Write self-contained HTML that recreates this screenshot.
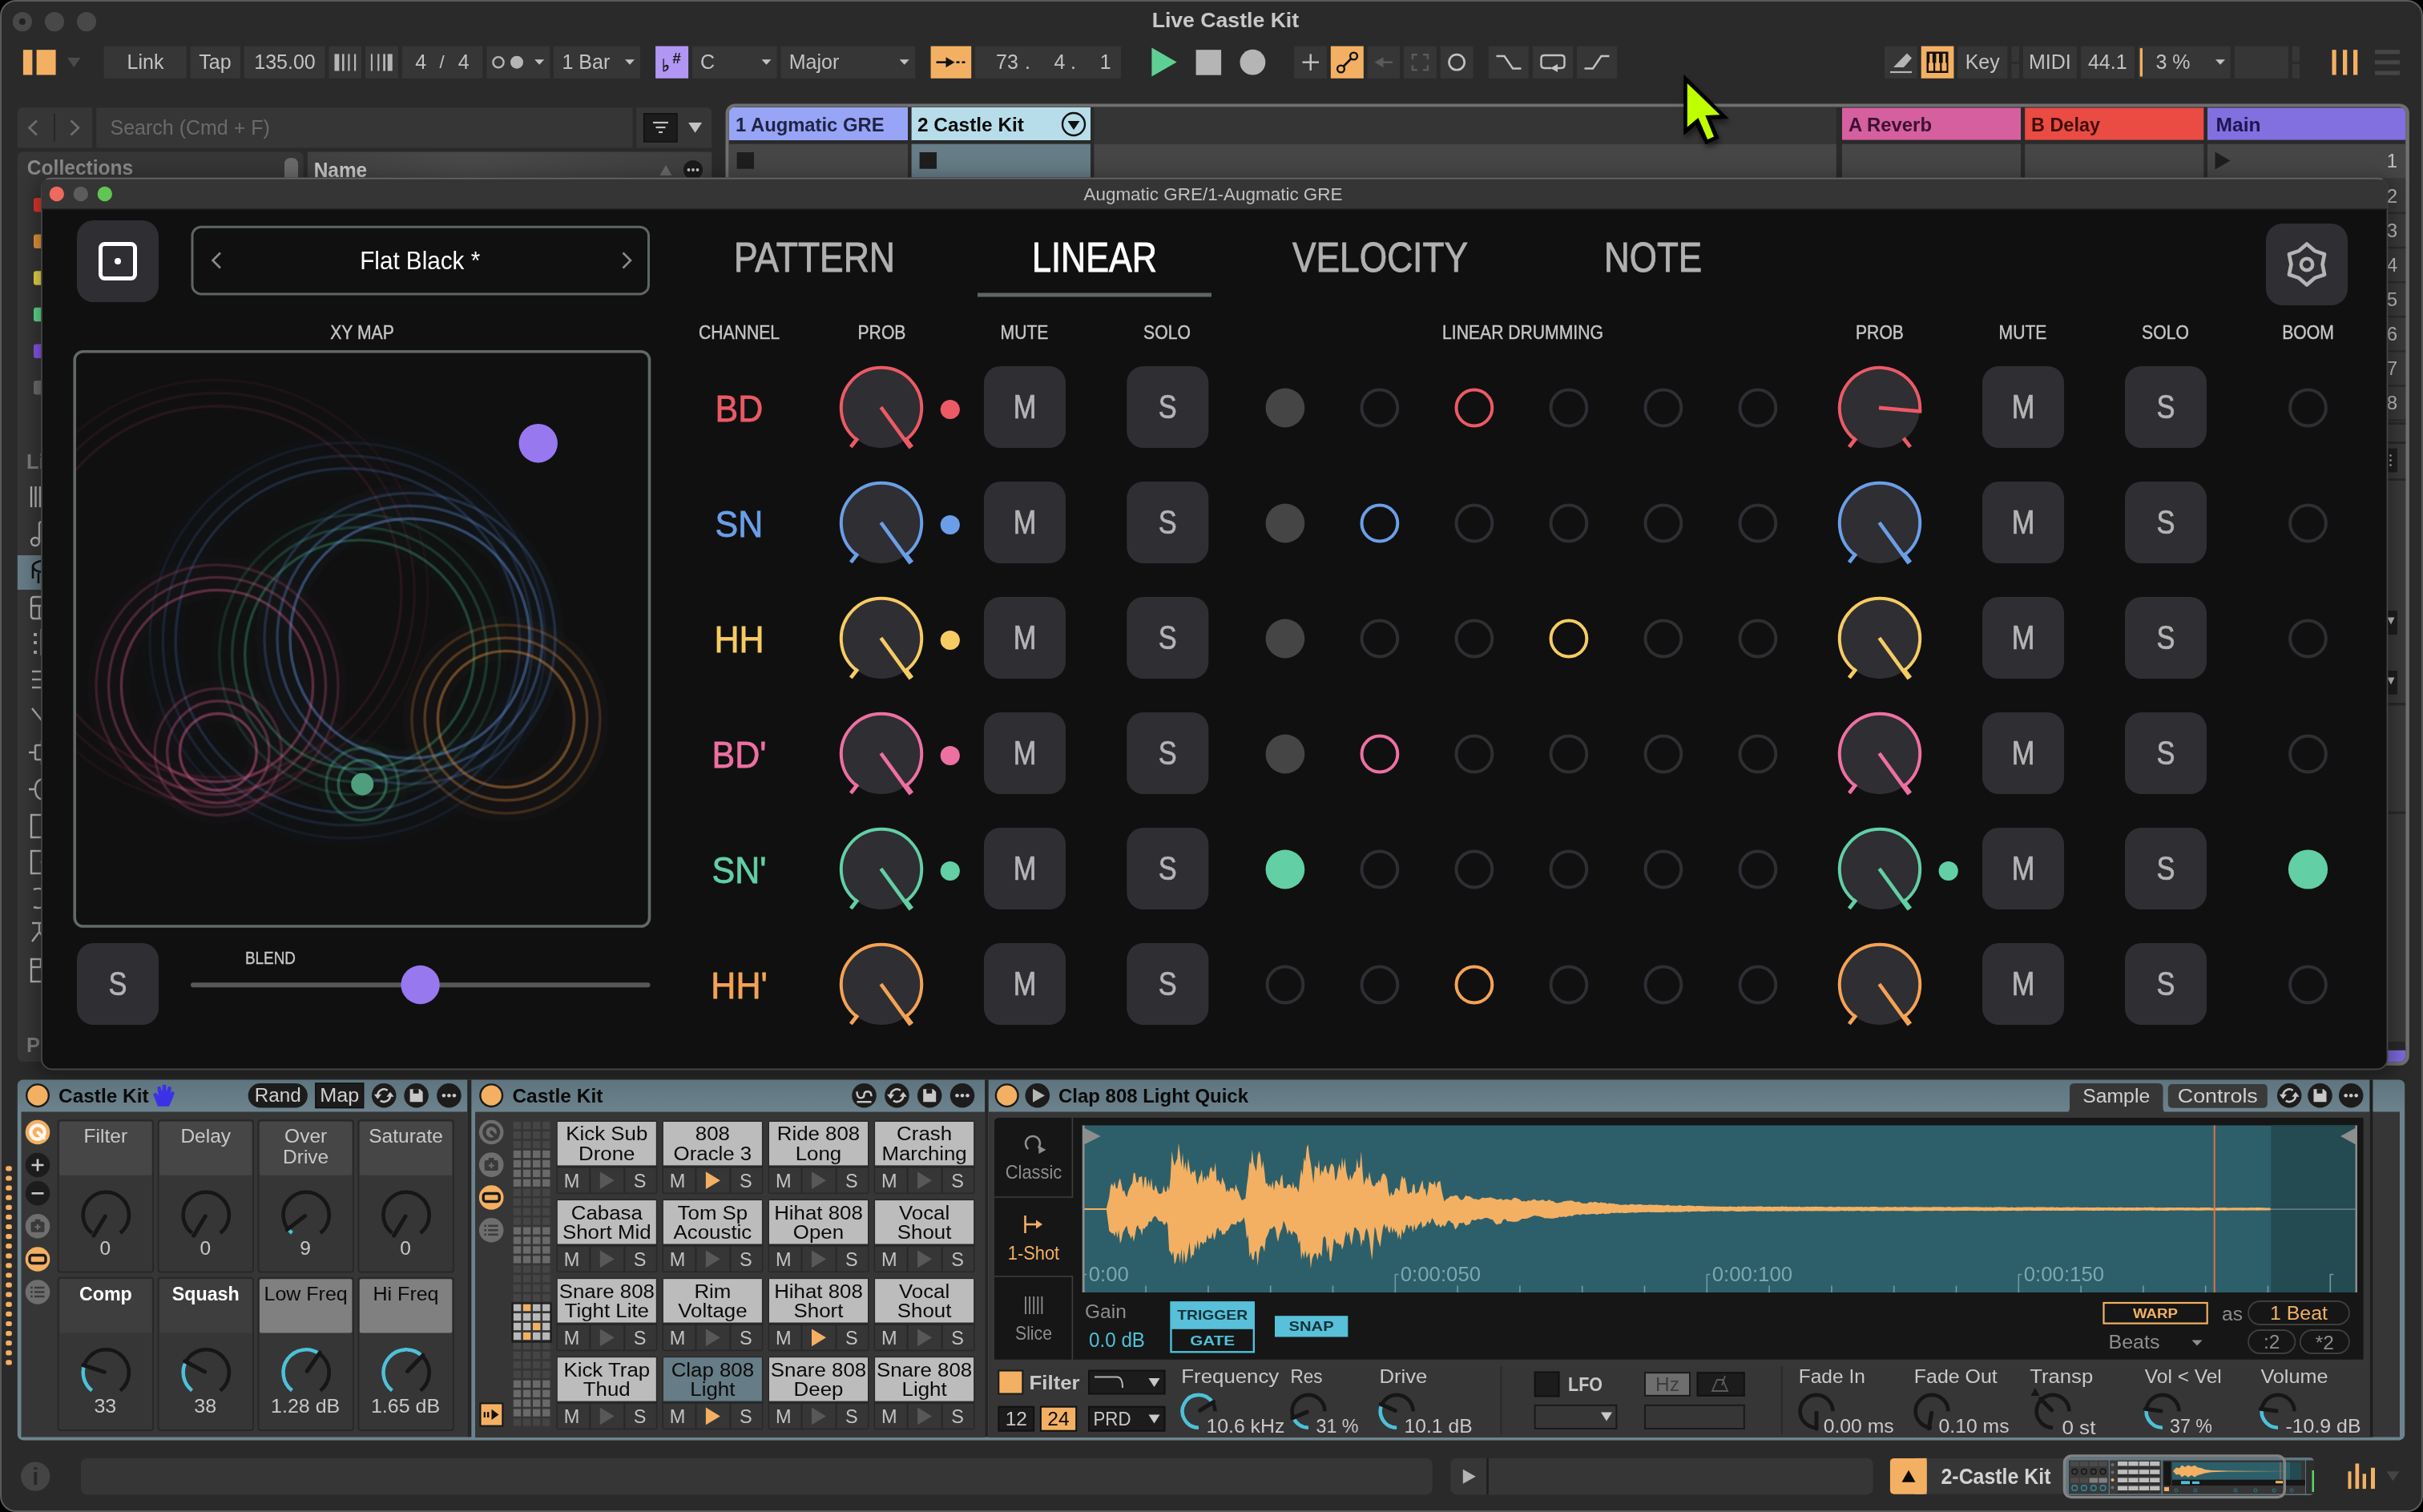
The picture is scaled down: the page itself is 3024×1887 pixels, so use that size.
<!DOCTYPE html>
<html><head><meta charset="utf-8"><title>Live Castle Kit</title>
<style>html,body{margin:0;padding:0;background:#000;overflow:hidden}svg{display:block}text{font-family:"Liberation Sans",sans-serif;white-space:pre}</style>
</head><body>
<svg style="will-change:transform" width="3024" height="1887" viewBox="0 0 3024 1887">
<rect x="0" y="0" width="3024" height="1887" fill="#000" />
<rect x="1" y="1" width="3022" height="1885" fill="#2a2a2a" rx="19" stroke="#5a5a5a" stroke-width="2" />
<circle cx="27.9" cy="27.1" r="12.1" fill="#484848" />
<circle cx="68" cy="27.1" r="12.1" fill="#484848" />
<circle cx="108" cy="27.1" r="12.1" fill="#484848" />
<circle cx="27.9" cy="27.1" r="4" fill="#222" />
<text x="1529.4" y="34.1" font-size="25" fill="#c8c8c8" text-anchor="middle" font-weight="bold"  textLength="183.5" lengthAdjust="spacingAndGlyphs">Live Castle Kit</text>
<rect x="28.9" y="62.2" width="11.5" height="31.3" fill="#f3b063" />
<rect x="45.6" y="62.2" width="24" height="31.3" fill="#f3b063" />
<polygon points="84.0,72.0 100.5,72.0 92.2,84.0" fill="#4a4a4a"/>
<rect x="129.7" y="57.6" width="103.2" height="40.2" fill="#363636" />
<text x="181.5" y="86.3" font-size="25" fill="#c2c2c2" text-anchor="middle" font-weight="normal" >Link</text>
<rect x="237.5" y="57.6" width="62.5" height="40.2" fill="#363636" />
<text x="268.5" y="86.3" font-size="25" fill="#c2c2c2" text-anchor="middle" font-weight="normal" >Tap</text>
<rect x="304.8" y="57.6" width="100.6" height="40.2" fill="#363636" />
<text x="355.5" y="86.3" font-size="25" fill="#c2c2c2" text-anchor="middle" font-weight="normal" >135.00</text>
<rect x="410.3" y="57.6" width="40.7" height="40.2" fill="#363636" />
<rect x="417.5" y="67.4" width="5.8" height="21.1" fill="#b5b5b5" />
<rect x="427" y="67.4" width="2.6" height="21.1" fill="#b5b5b5" />
<rect x="434.3" y="67.4" width="2.2" height="21.1" fill="#b5b5b5" />
<rect x="442" y="67.4" width="2.2" height="21.1" fill="#b5b5b5" />
<rect x="456" y="57.6" width="41" height="40.2" fill="#363636" />
<rect x="462.9" y="67.4" width="2" height="21.1" fill="#b5b5b5" />
<rect x="471.2" y="67.4" width="2.2" height="21.1" fill="#b5b5b5" />
<rect x="478.2" y="67.4" width="2.8" height="21.1" fill="#b5b5b5" />
<rect x="483.7" y="67.4" width="6" height="21.1" fill="#b5b5b5" />
<rect x="501.9" y="57.6" width="100.5" height="40.2" fill="#363636" />
<text x="525.3" y="86.3" font-size="25" fill="#c2c2c2" text-anchor="middle" font-weight="normal" >4</text>
<text x="551.5" y="85.3" font-size="22" fill="#c2c2c2" text-anchor="middle" font-weight="normal" >/</text>
<text x="578.7" y="86.3" font-size="25" fill="#c2c2c2" text-anchor="middle" font-weight="normal" >4</text>
<rect x="607.3" y="57.6" width="78.9" height="40.2" fill="#363636" />
<circle cx="622" cy="77.7" r="6.6" fill="none" stroke="#b5b5b5" stroke-width="2.4" />
<circle cx="645" cy="77.7" r="8" fill="#b5b5b5" />
<polygon points="667.2,74.2 679.2,74.2 673.2,80.8" fill="#c2c2c2"/>
<rect x="691" y="57.6" width="108" height="40.2" fill="#363636" />
<text x="701.5" y="86.3" font-size="25" fill="#c2c2c2" text-anchor="start" font-weight="normal" >1 Bar</text>
<polygon points="780.0,74.2 792.0,74.2 786.0,80.8" fill="#c2c2c2"/>
<rect x="818.1" y="57.6" width="41" height="40.2" fill="#b296f3" />
<text x="830.5" y="88.7" font-size="21" fill="#1a1a1a" text-anchor="middle" font-weight="bold" >♭</text>
<text x="844.5" y="79.0" font-size="19" fill="#1a1a1a" text-anchor="middle" font-weight="bold" >#</text>
<rect x="864" y="57.6" width="105.5" height="40.2" fill="#363636" />
<text x="874" y="86.3" font-size="25" fill="#c2c2c2" text-anchor="start" font-weight="normal" >C</text>
<polygon points="950.5,74.2 962.5,74.2 956.5,80.8" fill="#c2c2c2"/>
<rect x="974.4" y="57.6" width="167.9" height="40.2" fill="#363636" />
<text x="984.8" y="86.3" font-size="25" fill="#c2c2c2" text-anchor="start" font-weight="normal" >Major</text>
<polygon points="1122.7,74.2 1134.7,74.2 1128.7,80.8" fill="#c2c2c2"/>
<rect x="1161.6" y="57.6" width="50.6" height="40.2" fill="#f3b063" />
<line x1="1168.50" y1="77.70" x2="1185.00" y2="77.70" stroke="#111" stroke-width="2.6" />
<polygon points="1180.5,71.2 1180.5,84.2 1191.5,77.7" fill="#111"/>
<line x1="1193.50" y1="77.70" x2="1197.50" y2="77.70" stroke="#111" stroke-width="2.6" />
<line x1="1200.50" y1="77.70" x2="1204.50" y2="77.70" stroke="#111" stroke-width="2.6" />
<rect x="1217.1" y="57.6" width="181.9" height="40.2" fill="#363636" />
<text x="1257" y="86.3" font-size="25" fill="#c2c2c2" text-anchor="middle" font-weight="normal" >73</text>
<text x="1282.4" y="86.3" font-size="25" fill="#c2c2c2" text-anchor="middle" font-weight="normal" >.</text>
<text x="1322.5" y="86.3" font-size="25" fill="#c2c2c2" text-anchor="middle" font-weight="normal" >4</text>
<text x="1339.6" y="86.3" font-size="25" fill="#c2c2c2" text-anchor="middle" font-weight="normal" >.</text>
<text x="1379.6" y="86.3" font-size="25" fill="#c2c2c2" text-anchor="middle" font-weight="normal" >1</text>
<polygon points="1437.4,59.6 1437.4,95.5 1468.6,77.6" fill="#5fd093"/>
<rect x="1492.6" y="62.2" width="31.5" height="31.5" fill="#b5b5b5" />
<circle cx="1563.4" cy="77.7" r="15.9" fill="#b5b5b5" />
<rect x="1615.1" y="57.6" width="40.8" height="40.2" fill="#363636" />
<line x1="1625.50" y1="77.70" x2="1646.00" y2="77.70" stroke="#c2c2c2" stroke-width="2.4" />
<line x1="1635.70" y1="67.50" x2="1635.70" y2="88.00" stroke="#c2c2c2" stroke-width="2.4" />
<rect x="1660.8" y="57.6" width="41" height="40.2" fill="#f3b063" />
<line x1="1674.00" y1="85.50" x2="1689.00" y2="70.50" stroke="#111" stroke-width="2.6" />
<circle cx="1673.5" cy="86" r="4.4" fill="#f3b063" stroke="#111" stroke-width="2.4" />
<circle cx="1689.5" cy="70" r="4.4" fill="#f3b063" stroke="#111" stroke-width="2.4" />
<rect x="1706.4" y="57.6" width="40.8" height="40.2" fill="#363636" />
<line x1="1722.00" y1="77.70" x2="1738.00" y2="77.70" stroke="#5a5a5a" stroke-width="2.6" />
<polygon points="1726.5,71.2 1726.5,84.2 1715.5,77.7" fill="#5a5a5a"/>
<rect x="1752" y="57.6" width="40.8" height="40.2" fill="#363636" />
<path d="M1768.9 68.2H1762.9V74.2" fill="none" stroke="#5a5a5a" stroke-width="2.4" />
<path d="M1768.9 87.2H1762.9V81.2" fill="none" stroke="#5a5a5a" stroke-width="2.4" />
<path d="M1775.9 68.2H1781.9V74.2" fill="none" stroke="#5a5a5a" stroke-width="2.4" />
<path d="M1775.9 87.2H1781.9V81.2" fill="none" stroke="#5a5a5a" stroke-width="2.4" />
<rect x="1797.7" y="57.6" width="40.8" height="40.2" fill="#363636" />
<circle cx="1818.1" cy="77.7" r="9.6" fill="none" stroke="#c2c2c2" stroke-width="2.6" />
<rect x="1857.8" y="57.6" width="50" height="40.2" fill="#363636" />
<path d="M1867.5 70H1877.5L1888 85.5H1898.5" fill="none" stroke="#c2c2c2" stroke-width="2.4" />
<rect x="1913" y="57.6" width="50" height="40.2" fill="#363636" />
<path d="M1936 85H1927.5Q1923.5 85 1923.5 81V73Q1923.5 69 1927.5 69H1948.5Q1952.5 69 1952.5 73V81Q1952.5 85 1948.5 85H1944" fill="none" stroke="#c2c2c2" stroke-width="2.4" />
<polygon points="1944.0,80.0 1944.0,90.0 1935.0,85.0" fill="#c2c2c2"/>
<rect x="1967.9" y="57.6" width="50.3" height="40.2" fill="#363636" />
<path d="M1977.5 85.5H1988L1998.5 70H2008.5" fill="none" stroke="#c2c2c2" stroke-width="2.4" />
<rect x="2352" y="57.6" width="40.8" height="40.2" fill="#363636" />
<path d="M2363 84L2380 66.5L2386 72.5L2376 84Z" fill="#b5b5b5" />
<line x1="2359.00" y1="90.00" x2="2386.00" y2="90.00" stroke="#b5b5b5" stroke-width="2.2" />
<rect x="2397.7" y="57.6" width="40.7" height="40.2" fill="#f3b063" />
<rect x="2404.5" y="64.5" width="27" height="26.5" fill="#111" />
<rect x="2407" y="78.5" width="6" height="10" fill="#f3b063" />
<rect x="2415.2" y="78.5" width="6" height="10" fill="#f3b063" />
<rect x="2423.4" y="78.5" width="6" height="10" fill="#f3b063" />
<rect x="2408.2" y="67" width="3.6" height="12" fill="#f3b063" />
<rect x="2416.4" y="67" width="3.6" height="12" fill="#f3b063" />
<rect x="2424.6" y="67" width="3.6" height="12" fill="#f3b063" />
<rect x="2443" y="57.6" width="62.4" height="40.2" fill="#363636" />
<text x="2474.2" y="86.3" font-size="25" fill="#c2c2c2" text-anchor="middle" font-weight="normal" >Key</text>
<rect x="2510.4" y="57.6" width="9.6" height="19.4" fill="#363636" />
<rect x="2510.4" y="79.6" width="9.6" height="18.2" fill="#363636" />
<rect x="2524.8" y="57.6" width="67" height="40.2" fill="#363636" />
<text x="2558.3" y="86.3" font-size="25" fill="#c2c2c2" text-anchor="middle" font-weight="normal" >MIDI</text>
<rect x="2596.8" y="57.6" width="67" height="40.2" fill="#363636" />
<text x="2630.3" y="86.3" font-size="25" fill="#c2c2c2" text-anchor="middle" font-weight="normal" >44.1</text>
<rect x="2668.7" y="57.6" width="115" height="40.2" fill="#363636" />
<rect x="2670.7" y="60.2" width="3.3" height="35.3" fill="#f3b063" />
<text x="2712" y="86.3" font-size="25" fill="#c2c2c2" text-anchor="middle" font-weight="normal" >3 %</text>
<polygon points="2765.0,74.2 2777.0,74.2 2771.0,80.8" fill="#c2c2c2"/>
<rect x="2788.6" y="57.6" width="67.4" height="40.2" fill="#363636" />
<rect x="2860.8" y="57.6" width="9.2" height="19.4" fill="#363636" />
<rect x="2860.8" y="79.6" width="9.2" height="18.2" fill="#363636" />
<rect x="2910.5" y="62.2" width="5.2" height="31.3" fill="#f3b063" />
<rect x="2924" y="62.2" width="5.3" height="31.3" fill="#f3b063" />
<rect x="2937" y="62.2" width="5.3" height="31.3" fill="#f3b063" />
<rect x="2964" y="62.2" width="31" height="5.2" fill="#454545" />
<rect x="2964" y="75.2" width="31" height="5.2" fill="#454545" />
<rect x="2964" y="88.5" width="31" height="5.2" fill="#454545" />
<path d="M21.8 184.6V141Q21.8 134.3 28.5 134.3H115V184.6Z" fill="#363636" />
<path d="M46 150.5L36.5 159.5L46 168.5" fill="none" stroke="#6e6e6e" stroke-width="2.6" />
<line x1="68.00" y1="142.00" x2="68.00" y2="177.00" stroke="#222" stroke-width="1.6" />
<path d="M88.5 150.5L98 159.5L88.5 168.5" fill="none" stroke="#6e6e6e" stroke-width="2.6" />
<rect x="120.2" y="134.3" width="669.3" height="50.3" fill="#363636" />
<text x="137.5" y="168.4" font-size="25" fill="#6a6a6a" text-anchor="start" font-weight="normal" >Search (Cmd + F)</text>
<path d="M794.3 134.3H881.5Q888.2 134.3 888.2 141V184.6H794.3Z" fill="#363636" />
<rect x="803.7" y="141.8" width="41.3" height="35.2" fill="#1c1c1c" stroke="#101010" stroke-width="1.5" />
<line x1="815.00" y1="153.00" x2="834.00" y2="153.00" stroke="#c2c2c2" stroke-width="2.2" />
<line x1="818.50" y1="159.00" x2="830.50" y2="159.00" stroke="#c2c2c2" stroke-width="2.2" />
<line x1="822.00" y1="165.00" x2="827.00" y2="165.00" stroke="#c2c2c2" stroke-width="2.2" />
<polygon points="859.1,152.9 876.1,152.9 867.6,165.7" fill="#c2c2c2"/>
<rect x="21.8" y="189.5" width="356.8" height="1135.5" fill="#363636" rx="6" />
<text x="33.8" y="218.2" font-size="25.5" fill="#8a8a8a" text-anchor="start" font-weight="bold"  textLength="132.5" lengthAdjust="spacingAndGlyphs">Collections</text>
<path d="M355 230V205Q355 197 363.5 197Q372 197 372 205V230Z" fill="#6a6a6a" />
<linearGradient id="gn" x1="0" x2="1" y1="0" y2="0"><stop offset="0" stop-color="#404040"/><stop offset="0.4" stop-color="#494949"/><stop offset="1" stop-color="#3e3e3e"/></linearGradient>
<rect x="383.8" y="189.5" width="504.4" height="40.5" fill="url(#gn)" />
<text x="391.7" y="221.1" font-size="25.5" fill="#c8c8c8" text-anchor="start" font-weight="bold"  textLength="66.5" lengthAdjust="spacingAndGlyphs">Name</text>
<polygon points="823.5,219.0 838.5,219.0 831.0,206.0" fill="#6a6a6a"/>
<circle cx="865" cy="212" r="12" fill="#1a1a1a" />
<circle cx="859.5" cy="212" r="1.9" fill="#c8c8c8" />
<circle cx="865" cy="212" r="1.9" fill="#c8c8c8" />
<circle cx="870.5" cy="212" r="1.9" fill="#c8c8c8" />
<rect x="42" y="247" width="12" height="17.5" fill="#e0362c" rx="3" />
<rect x="42" y="292.6" width="12" height="17.5" fill="#e8963a" rx="3" />
<rect x="42" y="338.2" width="12" height="17.5" fill="#ecd84a" rx="3" />
<rect x="42" y="383.8" width="12" height="17.5" fill="#5fdc8c" rx="3" />
<rect x="42" y="429.4" width="12" height="17.5" fill="#8a55ee" rx="3" />
<rect x="42" y="475" width="12" height="17.5" fill="#6e6e6e" rx="3" />
<text x="33" y="584.8" font-size="25.5" fill="#7c7c7c" text-anchor="start" font-weight="bold" >Library</text>
<rect x="21.8" y="693" width="32.2" height="43" fill="#667c86" />
<g transform="translate(4,0)">
<line x1="35.00" y1="607.00" x2="35.00" y2="633.00" stroke="#b5b5b5" stroke-width="2.4" />
<line x1="40.50" y1="607.00" x2="40.50" y2="633.00" stroke="#b5b5b5" stroke-width="2.4" />
<line x1="46.00" y1="607.00" x2="46.00" y2="633.00" stroke="#b5b5b5" stroke-width="2.4" />
<circle cx="40" cy="676" r="5" fill="none" stroke="#b5b5b5" stroke-width="2.4" />
<line x1="45.00" y1="676.00" x2="45.00" y2="652.00" stroke="#b5b5b5" stroke-width="2.4" />
<line x1="45.00" y1="652.00" x2="54.00" y2="650.00" stroke="#b5b5b5" stroke-width="2.4" />
<ellipse cx="50" cy="707" rx="13" ry="7" fill="none" stroke="#111" stroke-width="2.6"/>
<line x1="37.00" y1="707.00" x2="37.00" y2="722.00" stroke="#111" stroke-width="2.6" />
<line x1="44.00" y1="715.00" x2="44.00" y2="728.00" stroke="#111" stroke-width="2.6" />
<rect x="35" y="745" width="25" height="27" fill="none" rx="3" stroke="#b5b5b5" stroke-width="2.4" />
<line x1="35.00" y1="756.00" x2="56.00" y2="756.00" stroke="#b5b5b5" stroke-width="2.4" />
<line x1="45.00" y1="756.00" x2="45.00" y2="772.00" stroke="#b5b5b5" stroke-width="2.4" />
<rect x="38" y="790" width="4" height="4" fill="#b5b5b5" />
<line x1="48.00" y1="785.00" x2="48.00" y2="818.00" stroke="#b5b5b5" stroke-width="2.4" />
<rect x="38" y="800" width="4" height="4" fill="#b5b5b5" />
<line x1="48.00" y1="785.00" x2="48.00" y2="818.00" stroke="#b5b5b5" stroke-width="2.4" />
<rect x="38" y="812" width="4" height="4" fill="#b5b5b5" />
<line x1="48.00" y1="785.00" x2="48.00" y2="818.00" stroke="#b5b5b5" stroke-width="2.4" />
<line x1="36.00" y1="838.00" x2="54.00" y2="838.00" stroke="#b5b5b5" stroke-width="2.4" />
<line x1="36.00" y1="848.00" x2="54.00" y2="848.00" stroke="#b5b5b5" stroke-width="2.4" />
<line x1="36.00" y1="858.00" x2="54.00" y2="858.00" stroke="#b5b5b5" stroke-width="2.4" />
<path d="M36 884L52 904" fill="none" stroke="#b5b5b5" stroke-width="2.4" />
<rect x="40" y="930" width="16" height="18" fill="none" rx="2" stroke="#b5b5b5" stroke-width="2.4" />
<line x1="32.00" y1="939.00" x2="40.00" y2="939.00" stroke="#b5b5b5" stroke-width="2.4" />
<line x1="48.00" y1="924.00" x2="48.00" y2="930.00" stroke="#b5b5b5" stroke-width="2.4" />
<line x1="48.00" y1="948.00" x2="48.00" y2="954.00" stroke="#b5b5b5" stroke-width="2.4" />
<path d="M32 985H40M52 972Q40 972 40 985Q40 998 52 998" fill="none" stroke="#b5b5b5" stroke-width="2.4" />
<rect x="35" y="1017" width="25" height="28" fill="none" stroke="#b5b5b5" stroke-width="2.4" />
<rect x="35" y="1062" width="25" height="28" fill="none" stroke="#b5b5b5" stroke-width="2.4" />
<circle cx="48" cy="1076" r="1.5" fill="#b5b5b5" />
<path d="M38 1110Q50 1106 52 1116M38 1132Q50 1136 52 1126" fill="none" stroke="#b5b5b5" stroke-width="2.4" />
<path d="M36 1152H54M45 1152V1163L36 1175M45 1163L54 1175" fill="none" stroke="#b5b5b5" stroke-width="2.4" />
<rect x="35" y="1197" width="25" height="28" fill="none" stroke="#b5b5b5" stroke-width="2.4" />
<line x1="35.00" y1="1207.00" x2="56.00" y2="1207.00" stroke="#b5b5b5" stroke-width="2.4" />
<line x1="47.00" y1="1197.00" x2="47.00" y2="1207.00" stroke="#b5b5b5" stroke-width="2.4" />
</g>
<text x="33" y="1312.8" font-size="25.5" fill="#7c7c7c" text-anchor="start" font-weight="bold" >Places</text>
<rect x="905.5" y="129.5" width="2101.4" height="1200.3" fill="#707070" rx="12" />
<rect x="909.6" y="133.6" width="2092.6" height="1191.7" fill="#2a2a2a" rx="8" />
<clipPath id="cs"><rect x="909.6" y="133.6" width="2092.6" height="1191.7" rx="8"/></clipPath><g clip-path="url(#cs)">
<rect x="1365.5" y="133.6" width="926.3" height="46.4" fill="#353535" />
<rect x="1365.5" y="180" width="926.3" height="60" fill="#464646" />
<rect x="909.6" y="179.7" width="223.4" height="60.3" fill="#464646" />
<rect x="1137.6" y="179.7" width="223.4" height="60.3" fill="#667c86" />
<rect x="909.6" y="134" width="223.4" height="41" fill="#98a4f6" />
<text x="918" y="163.6" font-size="23.5" fill="#1e2444" text-anchor="start" font-weight="bold"  textLength="185.5" lengthAdjust="spacingAndGlyphs">1 Augmatic GRE</text>
<rect x="1137.6" y="134" width="223.4" height="41" fill="#b6dde9" />
<text x="1145" y="163.6" font-size="23.5" fill="#0a0a0a" text-anchor="start" font-weight="bold"  textLength="133" lengthAdjust="spacingAndGlyphs">2 Castle Kit</text>
<circle cx="1340" cy="155" r="14" fill="none" stroke="#111" stroke-width="2.4" />
<polygon points="1332.5,151.0 1347.5,151.0 1340.0,162.0" fill="#111"/>
<rect x="919.6" y="190" width="21.4" height="20.7" fill="#1e1e1e" />
<rect x="1147.6" y="190" width="21.4" height="20.7" fill="#1e1e1e" />
<rect x="2299" y="134.5" width="223" height="40.1" fill="#d65fa0" />
<text x="2307" y="163.6" font-size="23.5" fill="#3c1232" text-anchor="start" font-weight="bold"  textLength="104" lengthAdjust="spacingAndGlyphs">A Reverb</text>
<rect x="2527.2" y="134.5" width="223.1" height="40.1" fill="#ea4b42" />
<text x="2535" y="163.6" font-size="23.5" fill="#3e0f0c" text-anchor="start" font-weight="bold"  textLength="86" lengthAdjust="spacingAndGlyphs">B Delay</text>
<rect x="2755" y="134.5" width="248" height="40.1" fill="#8270e0" />
<text x="2765.6" y="163.6" font-size="23.5" fill="#1d1650" text-anchor="start" font-weight="bold"  textLength="56" lengthAdjust="spacingAndGlyphs">Main</text>
<rect x="2299" y="179.7" width="223" height="60.3" fill="#464646" />
<rect x="2527.2" y="179.7" width="223.1" height="60.3" fill="#464646" />
<rect x="2755" y="179.7" width="248" height="42.3" fill="#464646" />
<polygon points="2764.5,189.5 2764.5,211.5 2783.5,200.5" fill="#1e1e1e"/>
<text x="2992" y="209.3" font-size="24" fill="#c2c2c2" text-anchor="end" font-weight="normal" >1</text>
<rect x="2755" y="222" width="248" height="1078" fill="#3a3a3a" />
<text x="2992" y="252.6" font-size="24" fill="#c2c2c2" text-anchor="end" font-weight="normal" >2</text>
<rect x="2755" y="264.8" width="248" height="2.3" fill="#2c2c2c" />
<text x="2992" y="295.7" font-size="24" fill="#c2c2c2" text-anchor="end" font-weight="normal" >3</text>
<rect x="2755" y="307.9" width="248" height="2.3" fill="#2c2c2c" />
<text x="2992" y="338.8" font-size="24" fill="#c2c2c2" text-anchor="end" font-weight="normal" >4</text>
<rect x="2755" y="351" width="248" height="2.3" fill="#2c2c2c" />
<text x="2992" y="381.9" font-size="24" fill="#c2c2c2" text-anchor="end" font-weight="normal" >5</text>
<rect x="2755" y="394.1" width="248" height="2.3" fill="#2c2c2c" />
<text x="2992" y="425.0" font-size="24" fill="#c2c2c2" text-anchor="end" font-weight="normal" >6</text>
<rect x="2755" y="437.2" width="248" height="2.3" fill="#2c2c2c" />
<text x="2992" y="468.1" font-size="24" fill="#c2c2c2" text-anchor="end" font-weight="normal" >7</text>
<rect x="2755" y="480.3" width="248" height="2.3" fill="#2c2c2c" />
<text x="2992" y="511.2" font-size="24" fill="#c2c2c2" text-anchor="end" font-weight="normal" >8</text>
<rect x="2755" y="523.4" width="248" height="2.3" fill="#2c2c2c" />
<rect x="2755" y="527" width="248" height="3" fill="#2a2a2a" />
<rect x="2755" y="551" width="248" height="3" fill="#2a2a2a" />
<rect x="2979" y="559.6" width="13" height="29.8" fill="#1e1e1e" />
<circle cx="2983.5" cy="568.5" r="1.3" fill="#c2c2c2" />
<circle cx="2983.5" cy="574.5" r="1.3" fill="#c2c2c2" />
<circle cx="2983.5" cy="580.5" r="1.3" fill="#c2c2c2" />
<rect x="2755" y="597" width="248" height="3" fill="#2a2a2a" />
<rect x="2979" y="762" width="13" height="30" fill="#1e1e1e" />
<polygon points="2979.5,770.5 2988.5,770.5 2984.0,779.5" fill="#c2c2c2"/>
<rect x="2979" y="837" width="13" height="29.7" fill="#1e1e1e" />
<polygon points="2979.5,845.5 2988.5,845.5 2984.0,854.5" fill="#c2c2c2"/>
<rect x="2755" y="877" width="248" height="3.5" fill="#2a2a2a" />
<rect x="2755" y="1012.5" width="248" height="3.5" fill="#2a2a2a" />
<rect x="2755" y="1306" width="248" height="4.8" fill="#2a2a2a" />
<rect x="2755" y="1310.8" width="248" height="17.2" fill="#7c6cdb" />
</g>
<rect x="46" y="222" width="2940" height="1122" fill="#000" rx="16" opacity="0.35" filter="url(#sh)"/>
<filter id="sh" x="-5%" y="-5%" width="110%" height="115%"><feGaussianBlur stdDeviation="12"/></filter>
<rect x="52" y="222.2" width="2927.5" height="1112.3" fill="#101011" rx="13" stroke="#454545" stroke-width="1.8" />
<path d="M52 261.2V235.2Q52 222.2 65 222.2H2966.5Q2979.5 222.2 2979.5 235.2V261.2Z" fill="#353535" />
<path d="M58 223.6Q60 222.8 65 222.8H2966.5Q2971 222.8 2973.5 223.6" fill="none" stroke="#707070" stroke-width="1.2" />
<line x1="52.00" y1="261.20" x2="2979.50" y2="261.20" stroke="#1a1a1a" stroke-width="1.2" />
<circle cx="70.8" cy="242" r="9.2" fill="#ee6a5e" />
<circle cx="100.8" cy="242" r="9.2" fill="#5c5c5c" />
<circle cx="130.8" cy="242" r="9.2" fill="#61c554" />
<text x="1514" y="249.5" font-size="22.8" fill="#c0c0c0" text-anchor="middle" font-weight="normal"  textLength="323" lengthAdjust="spacingAndGlyphs">Augmatic GRE/1-Augmatic GRE</text>
<rect x="96" y="275" width="102" height="102" fill="#2f2e33" rx="20.5" />
<rect x="125.5" y="304.5" width="43" height="43" fill="none" rx="5" stroke="#fff" stroke-width="5" />
<circle cx="147" cy="326" r="4" fill="#fff" />
<rect x="240" y="283.2" width="569.5" height="83.7" fill="none" rx="11" stroke="#5f6565" stroke-width="3" />
<path d="M275 315.5L265.5 325L275 334.5" fill="none" stroke="#8a8a8a" stroke-width="2.6" />
<path d="M777.5 315.5L787 325L777.5 334.5" fill="none" stroke="#8a8a8a" stroke-width="2.6" />
<text x="524.2" y="336.3" font-size="31.5" fill="#fff" text-anchor="middle" font-weight="normal"  textLength="150" lengthAdjust="spacingAndGlyphs">Flat Black *</text>
<text x="1016.5" y="338.9" font-size="52" fill="#b0b0b0" text-anchor="middle" font-weight="normal" stroke="#b0b0b0" stroke-width="0.9" textLength="201" lengthAdjust="spacingAndGlyphs">PATTERN</text>
<text x="1366" y="338.9" font-size="52" fill="#fff" text-anchor="middle" font-weight="normal" stroke="#fff" stroke-width="0.9" textLength="156" lengthAdjust="spacingAndGlyphs">LINEAR</text>
<text x="1722.5" y="338.9" font-size="52" fill="#b0b0b0" text-anchor="middle" font-weight="normal" stroke="#b0b0b0" stroke-width="0.9" textLength="219" lengthAdjust="spacingAndGlyphs">VELOCITY</text>
<text x="2063" y="338.9" font-size="52" fill="#b0b0b0" text-anchor="middle" font-weight="normal" stroke="#b0b0b0" stroke-width="0.9" textLength="122" lengthAdjust="spacingAndGlyphs">NOTE</text>
<rect x="1220" y="365.5" width="292" height="5" fill="#5f6565" />
<rect x="2828" y="279" width="102" height="102" fill="#2f2e33" rx="20.5" />
<path d="M2879.0 304.5 L2888.8 313.1 L2901.1 317.2 L2898.5 330.0 L2901.1 342.8 L2888.8 346.9 L2879.0 355.5 L2869.2 346.9 L2856.9 342.8 L2859.5 330.0 L2856.9 317.2 L2869.2 313.1Z" fill="none" stroke="#b4b4b4" stroke-width="4.6" stroke-linejoin="round"/>
<circle cx="2879" cy="330" r="7.2" fill="none" stroke="#b4b4b4" stroke-width="4.4" />
<text x="452" y="423.1" font-size="23.5" fill="#c6c6c6" text-anchor="middle" font-weight="normal" stroke="#c6c6c6" stroke-width="0.40" textLength="79.5438" lengthAdjust="spacingAndGlyphs">XY MAP</text>
<text x="922.5" y="423.1" font-size="23.5" fill="#c6c6c6" text-anchor="middle" font-weight="normal" stroke="#c6c6c6" stroke-width="0.40" textLength="101.076" lengthAdjust="spacingAndGlyphs">CHANNEL</text>
<text x="1100.5" y="423.1" font-size="23.5" fill="#c6c6c6" text-anchor="middle" font-weight="normal" stroke="#c6c6c6" stroke-width="0.40" textLength="59.9404" lengthAdjust="spacingAndGlyphs">PROB</text>
<text x="1278.5" y="423.1" font-size="23.5" fill="#c6c6c6" text-anchor="middle" font-weight="normal" stroke="#c6c6c6" stroke-width="0.40" textLength="59.9206" lengthAdjust="spacingAndGlyphs">MUTE</text>
<text x="1456.5" y="423.1" font-size="23.5" fill="#c6c6c6" text-anchor="middle" font-weight="normal" stroke="#c6c6c6" stroke-width="0.40" textLength="58.7722" lengthAdjust="spacingAndGlyphs">SOLO</text>
<text x="1900.5" y="423.1" font-size="23.5" fill="#c6c6c6" text-anchor="middle" font-weight="normal" stroke="#c6c6c6" stroke-width="0.40" textLength="200.94" lengthAdjust="spacingAndGlyphs">LINEAR DRUMMING</text>
<text x="2346" y="423.1" font-size="23.5" fill="#c6c6c6" text-anchor="middle" font-weight="normal" stroke="#c6c6c6" stroke-width="0.40" textLength="59.9404" lengthAdjust="spacingAndGlyphs">PROB</text>
<text x="2524.5" y="423.1" font-size="23.5" fill="#c6c6c6" text-anchor="middle" font-weight="normal" stroke="#c6c6c6" stroke-width="0.40" textLength="59.9206" lengthAdjust="spacingAndGlyphs">MUTE</text>
<text x="2702.5" y="423.1" font-size="23.5" fill="#c6c6c6" text-anchor="middle" font-weight="normal" stroke="#c6c6c6" stroke-width="0.40" textLength="58.7722" lengthAdjust="spacingAndGlyphs">SOLO</text>
<text x="2880.5" y="423.1" font-size="23.5" fill="#c6c6c6" text-anchor="middle" font-weight="normal" stroke="#c6c6c6" stroke-width="0.40" textLength="64.6281" lengthAdjust="spacingAndGlyphs">BOOM</text>
<clipPath id="cxy"><rect x="94.5" y="440" width="715" height="715" rx="9"/></clipPath><g clip-path="url(#cxy)">
<circle cx="269.4" cy="738.5" r="248" fill="none" stroke="#e0566a" stroke-width="54.8" opacity="0.006"/>
<circle cx="269.4" cy="738.5" r="231.6" fill="none" stroke="#e0566a" stroke-width="5" opacity="0.026"/>
<circle cx="269.4" cy="738.5" r="231.6" fill="none" stroke="#e0566a" stroke-width="3.2" opacity="0.086"/>
<circle cx="269.4" cy="738.5" r="248" fill="none" stroke="#e0566a" stroke-width="5" opacity="0.019"/>
<circle cx="269.4" cy="738.5" r="248" fill="none" stroke="#e0566a" stroke-width="3.2" opacity="0.065"/>
<circle cx="269.4" cy="738.5" r="264.4" fill="none" stroke="#e0566a" stroke-width="5" opacity="0.013"/>
<circle cx="269.4" cy="738.5" r="264.4" fill="none" stroke="#e0566a" stroke-width="3.2" opacity="0.043"/>
<circle cx="433.8" cy="799.4" r="230.75" fill="none" stroke="#5f86d8" stroke-width="54.1" opacity="0.011"/>
<circle cx="433.8" cy="799.4" r="214.7" fill="none" stroke="#5f86d8" stroke-width="5" opacity="0.048"/>
<circle cx="433.8" cy="799.4" r="214.7" fill="none" stroke="#5f86d8" stroke-width="3.2" opacity="0.162"/>
<circle cx="433.8" cy="799.4" r="230.5" fill="none" stroke="#5f86d8" stroke-width="5" opacity="0.035"/>
<circle cx="433.8" cy="799.4" r="230.5" fill="none" stroke="#5f86d8" stroke-width="3.2" opacity="0.119"/>
<circle cx="433.8" cy="799.4" r="246.8" fill="none" stroke="#5f86d8" stroke-width="5" opacity="0.022"/>
<circle cx="433.8" cy="799.4" r="246.8" fill="none" stroke="#5f86d8" stroke-width="3.2" opacity="0.076"/>
<circle cx="448.7" cy="817" r="159" fill="none" stroke="#3f9e78" stroke-width="54" opacity="0.019"/>
<circle cx="448.7" cy="817" r="143" fill="none" stroke="#3f9e78" stroke-width="5" opacity="0.088"/>
<circle cx="448.7" cy="817" r="143" fill="none" stroke="#3f9e78" stroke-width="3.2" opacity="0.297"/>
<circle cx="448.7" cy="817" r="159" fill="none" stroke="#3f9e78" stroke-width="5" opacity="0.064"/>
<circle cx="448.7" cy="817" r="159" fill="none" stroke="#3f9e78" stroke-width="3.2" opacity="0.216"/>
<circle cx="448.7" cy="817" r="175" fill="none" stroke="#3f9e78" stroke-width="5" opacity="0.042"/>
<circle cx="448.7" cy="817" r="175" fill="none" stroke="#3f9e78" stroke-width="3.2" opacity="0.140"/>
<circle cx="511.5" cy="796.8" r="165.5" fill="none" stroke="#6a95e6" stroke-width="54" opacity="0.022"/>
<circle cx="511.5" cy="796.8" r="149.5" fill="none" stroke="#6a95e6" stroke-width="5" opacity="0.099"/>
<circle cx="511.5" cy="796.8" r="149.5" fill="none" stroke="#6a95e6" stroke-width="3.2" opacity="0.335"/>
<circle cx="511.5" cy="796.8" r="165.5" fill="none" stroke="#6a95e6" stroke-width="5" opacity="0.072"/>
<circle cx="511.5" cy="796.8" r="165.5" fill="none" stroke="#6a95e6" stroke-width="3.2" opacity="0.243"/>
<circle cx="511.5" cy="796.8" r="181.5" fill="none" stroke="#6a95e6" stroke-width="5" opacity="0.048"/>
<circle cx="511.5" cy="796.8" r="181.5" fill="none" stroke="#6a95e6" stroke-width="3.2" opacity="0.162"/>
<circle cx="271" cy="856" r="135.3" fill="none" stroke="#e0648e" stroke-width="53.4" opacity="0.018"/>
<circle cx="271" cy="856" r="119.6" fill="none" stroke="#e0648e" stroke-width="5" opacity="0.083"/>
<circle cx="271" cy="856" r="119.6" fill="none" stroke="#e0648e" stroke-width="3.2" opacity="0.281"/>
<circle cx="271" cy="856" r="135.5" fill="none" stroke="#e0648e" stroke-width="5" opacity="0.064"/>
<circle cx="271" cy="856" r="135.5" fill="none" stroke="#e0648e" stroke-width="3.2" opacity="0.216"/>
<circle cx="271" cy="856" r="151" fill="none" stroke="#e0648e" stroke-width="5" opacity="0.042"/>
<circle cx="271" cy="856" r="151" fill="none" stroke="#e0648e" stroke-width="3.2" opacity="0.140"/>
<circle cx="272.3" cy="938.4" r="63.4" fill="none" stroke="#e8689a" stroke-width="53.2" opacity="0.022"/>
<circle cx="272.3" cy="938.4" r="47.8" fill="none" stroke="#e8689a" stroke-width="5" opacity="0.099"/>
<circle cx="272.3" cy="938.4" r="47.8" fill="none" stroke="#e8689a" stroke-width="3.2" opacity="0.335"/>
<circle cx="272.3" cy="938.4" r="63.6" fill="none" stroke="#e8689a" stroke-width="5" opacity="0.072"/>
<circle cx="272.3" cy="938.4" r="63.6" fill="none" stroke="#e8689a" stroke-width="3.2" opacity="0.243"/>
<circle cx="272.3" cy="938.4" r="79" fill="none" stroke="#e8689a" stroke-width="5" opacity="0.048"/>
<circle cx="272.3" cy="938.4" r="79" fill="none" stroke="#e8689a" stroke-width="3.2" opacity="0.162"/>
<circle cx="631.4" cy="897.5" r="101.25" fill="none" stroke="#e8944a" stroke-width="54.5" opacity="0.022"/>
<circle cx="631.4" cy="897.5" r="85" fill="none" stroke="#e8944a" stroke-width="5" opacity="0.099"/>
<circle cx="631.4" cy="897.5" r="85" fill="none" stroke="#e8944a" stroke-width="3.2" opacity="0.335"/>
<circle cx="631.4" cy="897.5" r="101.3" fill="none" stroke="#e8944a" stroke-width="5" opacity="0.072"/>
<circle cx="631.4" cy="897.5" r="101.3" fill="none" stroke="#e8944a" stroke-width="3.2" opacity="0.243"/>
<circle cx="631.4" cy="897.5" r="117.5" fill="none" stroke="#e8944a" stroke-width="5" opacity="0.048"/>
<circle cx="631.4" cy="897.5" r="117.5" fill="none" stroke="#e8944a" stroke-width="3.2" opacity="0.162"/>
<circle cx="452.2" cy="978.7" r="37.5" fill="none" stroke="#58c89a" stroke-width="37" opacity="0.019"/>
<circle cx="452.2" cy="978.7" r="30" fill="none" stroke="#58c89a" stroke-width="5" opacity="0.088"/>
<circle cx="452.2" cy="978.7" r="30" fill="none" stroke="#58c89a" stroke-width="3.2" opacity="0.297"/>
<circle cx="452.2" cy="978.7" r="45" fill="none" stroke="#58c89a" stroke-width="5" opacity="0.064"/>
<circle cx="452.2" cy="978.7" r="45" fill="none" stroke="#58c89a" stroke-width="3.2" opacity="0.216"/>
<circle cx="452.2" cy="978.7" r="14" fill="#4f9f7f" />
</g>
<rect x="93.2" y="438.7" width="717.3" height="717.3" fill="none" rx="10.5" stroke="#626868" stroke-width="3.6" />
<circle cx="671.7" cy="553.2" r="24.2" fill="#9878ee" />
<rect x="96" y="1177" width="102" height="102" fill="#2f2e33" rx="20.5" />
<text x="147" y="1242.4" font-size="42" fill="#b4b4b4" text-anchor="middle" font-weight="normal" stroke="#b4b4b4" stroke-width="0.71" textLength="22.9726" lengthAdjust="spacingAndGlyphs">S</text>
<text x="337.5" y="1202.6" font-size="21.5" fill="#c6c6c6" text-anchor="middle" font-weight="normal" stroke="#c6c6c6" stroke-width="0.37" textLength="63.0908" lengthAdjust="spacingAndGlyphs">BLEND</text>
<line x1="241" y1="1229.3" x2="808.5" y2="1229.3" stroke="#585858" stroke-width="6" stroke-linecap="round"/>
<circle cx="524.6" cy="1229" r="24.2" fill="#9878ee" />
<text x="922.5" y="526.0" font-size="46.5" fill="#ec5a65" text-anchor="middle" font-weight="normal" stroke="#ec5a65" stroke-width="0.79" textLength="59.7538" lengthAdjust="spacingAndGlyphs">BD</text>
<circle cx="1100" cy="509" r="50" fill="#2f2e33" />
<path d="M1069.09 548.56A50.2 50.2 0 1 1 1130.91 548.56" fill="none" stroke="#ec5a65" stroke-width="4" />
<line x1="1070.45" y1="546.82" x2="1061.83" y2="557.86" stroke="#ec5a65" stroke-width="4.8" />
<line x1="1129.55" y1="546.82" x2="1138.17" y2="557.86" stroke="#ec5a65" stroke-width="4.8" />
<line x1="1099.41" y1="508.19" x2="1136.44" y2="559.16" stroke="#ec5a65" stroke-width="4.6" />
<circle cx="1185.8" cy="511" r="12.1" fill="#ec5a65" />
<rect x="1228" y="457" width="102" height="102" fill="#2f2e33" rx="20.5" />
<text x="1279" y="522.4" font-size="42" fill="#b4b4b4" text-anchor="middle" font-weight="normal" stroke="#b4b4b4" stroke-width="0.71" textLength="28.6901" lengthAdjust="spacingAndGlyphs">M</text>
<rect x="1406.3" y="457" width="102" height="102" fill="#2f2e33" rx="20.5" />
<text x="1457.3" y="522.4" font-size="42" fill="#b4b4b4" text-anchor="middle" font-weight="normal" stroke="#b4b4b4" stroke-width="0.71" textLength="22.9726" lengthAdjust="spacingAndGlyphs">S</text>
<circle cx="1603.9" cy="509" r="24.4" fill="#454545" />
<circle cx="1721.9" cy="509" r="22.4" fill="none" stroke="#2f2e33" stroke-width="4" />
<circle cx="1839.9" cy="509" r="22.4" fill="none" stroke="#ec5a65" stroke-width="4" />
<circle cx="1957.9" cy="509" r="22.4" fill="none" stroke="#2f2e33" stroke-width="4" />
<circle cx="2075.9" cy="509" r="22.4" fill="none" stroke="#2f2e33" stroke-width="4" />
<circle cx="2193.9" cy="509" r="22.4" fill="none" stroke="#2f2e33" stroke-width="4" />
<circle cx="2346" cy="509" r="50" fill="#2f2e33" />
<path d="M2315.09 548.56A50.2 50.2 0 1 1 2396.01 513.38" fill="none" stroke="#ec5a65" stroke-width="4" />
<line x1="2316.45" y1="546.82" x2="2307.83" y2="557.86" stroke="#ec5a65" stroke-width="4.8" />
<line x1="2375.55" y1="546.82" x2="2384.17" y2="557.86" stroke="#ec5a65" stroke-width="4.8" />
<line x1="2345.00" y1="508.91" x2="2398.30" y2="513.58" stroke="#ec5a65" stroke-width="4.6" />
<rect x="2474" y="457" width="102" height="102" fill="#2f2e33" rx="20.5" />
<text x="2525" y="522.4" font-size="42" fill="#b4b4b4" text-anchor="middle" font-weight="normal" stroke="#b4b4b4" stroke-width="0.71" textLength="28.6901" lengthAdjust="spacingAndGlyphs">M</text>
<rect x="2652" y="457" width="102" height="102" fill="#2f2e33" rx="20.5" />
<text x="2703" y="522.4" font-size="42" fill="#b4b4b4" text-anchor="middle" font-weight="normal" stroke="#b4b4b4" stroke-width="0.71" textLength="22.9726" lengthAdjust="spacingAndGlyphs">S</text>
<circle cx="2880.5" cy="509" r="22.4" fill="none" stroke="#2f2e33" stroke-width="4" />
<text x="922.5" y="670.0" font-size="46.5" fill="#6a9fe8" text-anchor="middle" font-weight="normal" stroke="#6a9fe8" stroke-width="0.79" textLength="59.7538" lengthAdjust="spacingAndGlyphs">SN</text>
<circle cx="1100" cy="653" r="50" fill="#2f2e33" />
<path d="M1069.09 692.56A50.2 50.2 0 1 1 1130.91 692.56" fill="none" stroke="#6a9fe8" stroke-width="4" />
<line x1="1070.45" y1="690.82" x2="1061.83" y2="701.86" stroke="#6a9fe8" stroke-width="4.8" />
<line x1="1129.55" y1="690.82" x2="1138.17" y2="701.86" stroke="#6a9fe8" stroke-width="4.8" />
<line x1="1099.41" y1="652.19" x2="1136.44" y2="703.16" stroke="#6a9fe8" stroke-width="4.6" />
<circle cx="1185.8" cy="655" r="12.1" fill="#6a9fe8" />
<rect x="1228" y="601" width="102" height="102" fill="#2f2e33" rx="20.5" />
<text x="1279" y="666.4" font-size="42" fill="#b4b4b4" text-anchor="middle" font-weight="normal" stroke="#b4b4b4" stroke-width="0.71" textLength="28.6901" lengthAdjust="spacingAndGlyphs">M</text>
<rect x="1406.3" y="601" width="102" height="102" fill="#2f2e33" rx="20.5" />
<text x="1457.3" y="666.4" font-size="42" fill="#b4b4b4" text-anchor="middle" font-weight="normal" stroke="#b4b4b4" stroke-width="0.71" textLength="22.9726" lengthAdjust="spacingAndGlyphs">S</text>
<circle cx="1603.9" cy="653" r="24.4" fill="#454545" />
<circle cx="1721.9" cy="653" r="22.4" fill="none" stroke="#6a9fe8" stroke-width="4" />
<circle cx="1839.9" cy="653" r="22.4" fill="none" stroke="#2f2e33" stroke-width="4" />
<circle cx="1957.9" cy="653" r="22.4" fill="none" stroke="#2f2e33" stroke-width="4" />
<circle cx="2075.9" cy="653" r="22.4" fill="none" stroke="#2f2e33" stroke-width="4" />
<circle cx="2193.9" cy="653" r="22.4" fill="none" stroke="#2f2e33" stroke-width="4" />
<circle cx="2346" cy="653" r="50" fill="#2f2e33" />
<path d="M2315.09 692.56A50.2 50.2 0 1 1 2376.91 692.56" fill="none" stroke="#6a9fe8" stroke-width="4" />
<line x1="2316.45" y1="690.82" x2="2307.83" y2="701.86" stroke="#6a9fe8" stroke-width="4.8" />
<line x1="2375.55" y1="690.82" x2="2384.17" y2="701.86" stroke="#6a9fe8" stroke-width="4.8" />
<line x1="2345.41" y1="652.19" x2="2382.44" y2="703.16" stroke="#6a9fe8" stroke-width="4.6" />
<rect x="2474" y="601" width="102" height="102" fill="#2f2e33" rx="20.5" />
<text x="2525" y="666.4" font-size="42" fill="#b4b4b4" text-anchor="middle" font-weight="normal" stroke="#b4b4b4" stroke-width="0.71" textLength="28.6901" lengthAdjust="spacingAndGlyphs">M</text>
<rect x="2652" y="601" width="102" height="102" fill="#2f2e33" rx="20.5" />
<text x="2703" y="666.4" font-size="42" fill="#b4b4b4" text-anchor="middle" font-weight="normal" stroke="#b4b4b4" stroke-width="0.71" textLength="22.9726" lengthAdjust="spacingAndGlyphs">S</text>
<circle cx="2880.5" cy="653" r="22.4" fill="none" stroke="#2f2e33" stroke-width="4" />
<text x="922.5" y="814.0" font-size="46.5" fill="#f6cc62" text-anchor="middle" font-weight="normal" stroke="#f6cc62" stroke-width="0.79" textLength="62.1262" lengthAdjust="spacingAndGlyphs">HH</text>
<circle cx="1100" cy="797" r="50" fill="#2f2e33" />
<path d="M1069.09 836.56A50.2 50.2 0 1 1 1130.91 836.56" fill="none" stroke="#f6cc62" stroke-width="4" />
<line x1="1070.45" y1="834.82" x2="1061.83" y2="845.86" stroke="#f6cc62" stroke-width="4.8" />
<line x1="1129.55" y1="834.82" x2="1138.17" y2="845.86" stroke="#f6cc62" stroke-width="4.8" />
<line x1="1099.41" y1="796.19" x2="1136.44" y2="847.16" stroke="#f6cc62" stroke-width="4.6" />
<circle cx="1185.8" cy="799" r="12.1" fill="#f6cc62" />
<rect x="1228" y="745" width="102" height="102" fill="#2f2e33" rx="20.5" />
<text x="1279" y="810.4" font-size="42" fill="#b4b4b4" text-anchor="middle" font-weight="normal" stroke="#b4b4b4" stroke-width="0.71" textLength="28.6901" lengthAdjust="spacingAndGlyphs">M</text>
<rect x="1406.3" y="745" width="102" height="102" fill="#2f2e33" rx="20.5" />
<text x="1457.3" y="810.4" font-size="42" fill="#b4b4b4" text-anchor="middle" font-weight="normal" stroke="#b4b4b4" stroke-width="0.71" textLength="22.9726" lengthAdjust="spacingAndGlyphs">S</text>
<circle cx="1603.9" cy="797" r="24.4" fill="#454545" />
<circle cx="1721.9" cy="797" r="22.4" fill="none" stroke="#2f2e33" stroke-width="4" />
<circle cx="1839.9" cy="797" r="22.4" fill="none" stroke="#2f2e33" stroke-width="4" />
<circle cx="1957.9" cy="797" r="22.4" fill="none" stroke="#f6cc62" stroke-width="4" />
<circle cx="2075.9" cy="797" r="22.4" fill="none" stroke="#2f2e33" stroke-width="4" />
<circle cx="2193.9" cy="797" r="22.4" fill="none" stroke="#2f2e33" stroke-width="4" />
<circle cx="2346" cy="797" r="50" fill="#2f2e33" />
<path d="M2315.09 836.56A50.2 50.2 0 1 1 2376.91 836.56" fill="none" stroke="#f6cc62" stroke-width="4" />
<line x1="2316.45" y1="834.82" x2="2307.83" y2="845.86" stroke="#f6cc62" stroke-width="4.8" />
<line x1="2375.55" y1="834.82" x2="2384.17" y2="845.86" stroke="#f6cc62" stroke-width="4.8" />
<line x1="2345.41" y1="796.19" x2="2382.44" y2="847.16" stroke="#f6cc62" stroke-width="4.6" />
<rect x="2474" y="745" width="102" height="102" fill="#2f2e33" rx="20.5" />
<text x="2525" y="810.4" font-size="42" fill="#b4b4b4" text-anchor="middle" font-weight="normal" stroke="#b4b4b4" stroke-width="0.71" textLength="28.6901" lengthAdjust="spacingAndGlyphs">M</text>
<rect x="2652" y="745" width="102" height="102" fill="#2f2e33" rx="20.5" />
<text x="2703" y="810.4" font-size="42" fill="#b4b4b4" text-anchor="middle" font-weight="normal" stroke="#b4b4b4" stroke-width="0.71" textLength="22.9726" lengthAdjust="spacingAndGlyphs">S</text>
<circle cx="2880.5" cy="797" r="22.4" fill="none" stroke="#2f2e33" stroke-width="4" />
<text x="922.5" y="958.0" font-size="46.5" fill="#ee70a2" text-anchor="middle" font-weight="normal" stroke="#ee70a2" stroke-width="0.79" textLength="67.9665" lengthAdjust="spacingAndGlyphs">BD'</text>
<circle cx="1100" cy="941" r="50" fill="#2f2e33" />
<path d="M1069.09 980.56A50.2 50.2 0 1 1 1130.91 980.56" fill="none" stroke="#ee70a2" stroke-width="4" />
<line x1="1070.45" y1="978.82" x2="1061.83" y2="989.86" stroke="#ee70a2" stroke-width="4.8" />
<line x1="1129.55" y1="978.82" x2="1138.17" y2="989.86" stroke="#ee70a2" stroke-width="4.8" />
<line x1="1099.41" y1="940.19" x2="1136.44" y2="991.16" stroke="#ee70a2" stroke-width="4.6" />
<circle cx="1185.8" cy="943" r="12.1" fill="#ee70a2" />
<rect x="1228" y="889" width="102" height="102" fill="#2f2e33" rx="20.5" />
<text x="1279" y="954.4" font-size="42" fill="#b4b4b4" text-anchor="middle" font-weight="normal" stroke="#b4b4b4" stroke-width="0.71" textLength="28.6901" lengthAdjust="spacingAndGlyphs">M</text>
<rect x="1406.3" y="889" width="102" height="102" fill="#2f2e33" rx="20.5" />
<text x="1457.3" y="954.4" font-size="42" fill="#b4b4b4" text-anchor="middle" font-weight="normal" stroke="#b4b4b4" stroke-width="0.71" textLength="22.9726" lengthAdjust="spacingAndGlyphs">S</text>
<circle cx="1603.9" cy="941" r="24.4" fill="#454545" />
<circle cx="1721.9" cy="941" r="22.4" fill="none" stroke="#ee70a2" stroke-width="4" />
<circle cx="1839.9" cy="941" r="22.4" fill="none" stroke="#2f2e33" stroke-width="4" />
<circle cx="1957.9" cy="941" r="22.4" fill="none" stroke="#2f2e33" stroke-width="4" />
<circle cx="2075.9" cy="941" r="22.4" fill="none" stroke="#2f2e33" stroke-width="4" />
<circle cx="2193.9" cy="941" r="22.4" fill="none" stroke="#2f2e33" stroke-width="4" />
<circle cx="2346" cy="941" r="50" fill="#2f2e33" />
<path d="M2315.09 980.56A50.2 50.2 0 1 1 2376.91 980.56" fill="none" stroke="#ee70a2" stroke-width="4" />
<line x1="2316.45" y1="978.82" x2="2307.83" y2="989.86" stroke="#ee70a2" stroke-width="4.8" />
<line x1="2375.55" y1="978.82" x2="2384.17" y2="989.86" stroke="#ee70a2" stroke-width="4.8" />
<line x1="2345.41" y1="940.19" x2="2382.44" y2="991.16" stroke="#ee70a2" stroke-width="4.6" />
<rect x="2474" y="889" width="102" height="102" fill="#2f2e33" rx="20.5" />
<text x="2525" y="954.4" font-size="42" fill="#b4b4b4" text-anchor="middle" font-weight="normal" stroke="#b4b4b4" stroke-width="0.71" textLength="28.6901" lengthAdjust="spacingAndGlyphs">M</text>
<rect x="2652" y="889" width="102" height="102" fill="#2f2e33" rx="20.5" />
<text x="2703" y="954.4" font-size="42" fill="#b4b4b4" text-anchor="middle" font-weight="normal" stroke="#b4b4b4" stroke-width="0.71" textLength="22.9726" lengthAdjust="spacingAndGlyphs">S</text>
<circle cx="2880.5" cy="941" r="22.4" fill="none" stroke="#2f2e33" stroke-width="4" />
<text x="922.5" y="1102.0" font-size="46.5" fill="#62cfa5" text-anchor="middle" font-weight="normal" stroke="#62cfa5" stroke-width="0.79" textLength="67.9665" lengthAdjust="spacingAndGlyphs">SN'</text>
<circle cx="1100" cy="1085" r="50" fill="#2f2e33" />
<path d="M1069.09 1124.56A50.2 50.2 0 1 1 1130.91 1124.56" fill="none" stroke="#62cfa5" stroke-width="4" />
<line x1="1070.45" y1="1122.82" x2="1061.83" y2="1133.86" stroke="#62cfa5" stroke-width="4.8" />
<line x1="1129.55" y1="1122.82" x2="1138.17" y2="1133.86" stroke="#62cfa5" stroke-width="4.8" />
<line x1="1099.41" y1="1084.19" x2="1136.44" y2="1135.16" stroke="#62cfa5" stroke-width="4.6" />
<circle cx="1185.8" cy="1087" r="12.1" fill="#62cfa5" />
<rect x="1228" y="1033" width="102" height="102" fill="#2f2e33" rx="20.5" />
<text x="1279" y="1098.4" font-size="42" fill="#b4b4b4" text-anchor="middle" font-weight="normal" stroke="#b4b4b4" stroke-width="0.71" textLength="28.6901" lengthAdjust="spacingAndGlyphs">M</text>
<rect x="1406.3" y="1033" width="102" height="102" fill="#2f2e33" rx="20.5" />
<text x="1457.3" y="1098.4" font-size="42" fill="#b4b4b4" text-anchor="middle" font-weight="normal" stroke="#b4b4b4" stroke-width="0.71" textLength="22.9726" lengthAdjust="spacingAndGlyphs">S</text>
<circle cx="1603.9" cy="1085" r="24.4" fill="#62cfa5" />
<circle cx="1721.9" cy="1085" r="22.4" fill="none" stroke="#2f2e33" stroke-width="4" />
<circle cx="1839.9" cy="1085" r="22.4" fill="none" stroke="#2f2e33" stroke-width="4" />
<circle cx="1957.9" cy="1085" r="22.4" fill="none" stroke="#2f2e33" stroke-width="4" />
<circle cx="2075.9" cy="1085" r="22.4" fill="none" stroke="#2f2e33" stroke-width="4" />
<circle cx="2193.9" cy="1085" r="22.4" fill="none" stroke="#2f2e33" stroke-width="4" />
<circle cx="2346" cy="1085" r="50" fill="#2f2e33" />
<path d="M2315.09 1124.56A50.2 50.2 0 1 1 2376.91 1124.56" fill="none" stroke="#62cfa5" stroke-width="4" />
<line x1="2316.45" y1="1122.82" x2="2307.83" y2="1133.86" stroke="#62cfa5" stroke-width="4.8" />
<line x1="2375.55" y1="1122.82" x2="2384.17" y2="1133.86" stroke="#62cfa5" stroke-width="4.8" />
<line x1="2345.41" y1="1084.19" x2="2382.44" y2="1135.16" stroke="#62cfa5" stroke-width="4.6" />
<circle cx="2431.7" cy="1087" r="12.1" fill="#62cfa5" />
<rect x="2474" y="1033" width="102" height="102" fill="#2f2e33" rx="20.5" />
<text x="2525" y="1098.4" font-size="42" fill="#b4b4b4" text-anchor="middle" font-weight="normal" stroke="#b4b4b4" stroke-width="0.71" textLength="28.6901" lengthAdjust="spacingAndGlyphs">M</text>
<rect x="2652" y="1033" width="102" height="102" fill="#2f2e33" rx="20.5" />
<text x="2703" y="1098.4" font-size="42" fill="#b4b4b4" text-anchor="middle" font-weight="normal" stroke="#b4b4b4" stroke-width="0.71" textLength="22.9726" lengthAdjust="spacingAndGlyphs">S</text>
<circle cx="2880.5" cy="1085" r="24.6" fill="#62cfa5" />
<text x="922.5" y="1246.0" font-size="46.5" fill="#f4a354" text-anchor="middle" font-weight="normal" stroke="#f4a354" stroke-width="0.79" textLength="70.3389" lengthAdjust="spacingAndGlyphs">HH'</text>
<circle cx="1100" cy="1229" r="50" fill="#2f2e33" />
<path d="M1069.09 1268.56A50.2 50.2 0 1 1 1130.91 1268.56" fill="none" stroke="#f4a354" stroke-width="4" />
<line x1="1070.45" y1="1266.82" x2="1061.83" y2="1277.86" stroke="#f4a354" stroke-width="4.8" />
<line x1="1129.55" y1="1266.82" x2="1138.17" y2="1277.86" stroke="#f4a354" stroke-width="4.8" />
<line x1="1099.41" y1="1228.19" x2="1136.44" y2="1279.16" stroke="#f4a354" stroke-width="4.6" />
<rect x="1228" y="1177" width="102" height="102" fill="#2f2e33" rx="20.5" />
<text x="1279" y="1242.4" font-size="42" fill="#b4b4b4" text-anchor="middle" font-weight="normal" stroke="#b4b4b4" stroke-width="0.71" textLength="28.6901" lengthAdjust="spacingAndGlyphs">M</text>
<rect x="1406.3" y="1177" width="102" height="102" fill="#2f2e33" rx="20.5" />
<text x="1457.3" y="1242.4" font-size="42" fill="#b4b4b4" text-anchor="middle" font-weight="normal" stroke="#b4b4b4" stroke-width="0.71" textLength="22.9726" lengthAdjust="spacingAndGlyphs">S</text>
<circle cx="1603.9" cy="1229" r="22.4" fill="none" stroke="#2f2e33" stroke-width="4" />
<circle cx="1721.9" cy="1229" r="22.4" fill="none" stroke="#2f2e33" stroke-width="4" />
<circle cx="1839.9" cy="1229" r="22.4" fill="none" stroke="#f4a354" stroke-width="4" />
<circle cx="1957.9" cy="1229" r="22.4" fill="none" stroke="#2f2e33" stroke-width="4" />
<circle cx="2075.9" cy="1229" r="22.4" fill="none" stroke="#2f2e33" stroke-width="4" />
<circle cx="2193.9" cy="1229" r="22.4" fill="none" stroke="#2f2e33" stroke-width="4" />
<circle cx="2346" cy="1229" r="50" fill="#2f2e33" />
<path d="M2315.09 1268.56A50.2 50.2 0 1 1 2376.91 1268.56" fill="none" stroke="#f4a354" stroke-width="4" />
<line x1="2316.45" y1="1266.82" x2="2307.83" y2="1277.86" stroke="#f4a354" stroke-width="4.8" />
<line x1="2375.55" y1="1266.82" x2="2384.17" y2="1277.86" stroke="#f4a354" stroke-width="4.8" />
<line x1="2345.41" y1="1228.19" x2="2382.44" y2="1279.16" stroke="#f4a354" stroke-width="4.6" />
<rect x="2474" y="1177" width="102" height="102" fill="#2f2e33" rx="20.5" />
<text x="2525" y="1242.4" font-size="42" fill="#b4b4b4" text-anchor="middle" font-weight="normal" stroke="#b4b4b4" stroke-width="0.71" textLength="28.6901" lengthAdjust="spacingAndGlyphs">M</text>
<rect x="2652" y="1177" width="102" height="102" fill="#2f2e33" rx="20.5" />
<text x="2703" y="1242.4" font-size="42" fill="#b4b4b4" text-anchor="middle" font-weight="normal" stroke="#b4b4b4" stroke-width="0.71" textLength="22.9726" lengthAdjust="spacingAndGlyphs">S</text>
<circle cx="2880.5" cy="1229" r="22.4" fill="none" stroke="#2f2e33" stroke-width="4" />
<linearGradient id="gh" x1="0" x2="0" y1="1347" y2="1388" gradientUnits="userSpaceOnUse"><stop offset="0" stop-color="#5e747e"/><stop offset="1" stop-color="#6c838e"/></linearGradient>
<rect x="21.8" y="1347.4" width="2979.4" height="450" fill="url(#gh)" rx="7" />
<rect x="583.2" y="1347.4" width="5.1" height="446.1" fill="#262626" />
<rect x="1229.1" y="1347.4" width="4.6" height="446.1" fill="#252525" />
<rect x="2957.5" y="1387.5" width="37.5" height="406" fill="#363636" />
<rect x="2957.4" y="1347.4" width="4" height="446.1" fill="#1e1e1e" />
<rect x="26.5" y="1387.5" width="556.7" height="406" fill="#363636" />
<circle cx="47" cy="1367.2" r="13.8" fill="#f3b063" stroke="#1a1a1a" stroke-width="2.4" />
<text x="73" y="1375.7" font-size="23.6" fill="#0a0a0a" text-anchor="start" font-weight="bold"  textLength="112.7" lengthAdjust="spacingAndGlyphs">Castle Kit</text>
<path d="M197.5 1380Q194.5 1372 192.0 1366L194.5 1364.5L199.0 1370L197.0 1357.5L199.5 1356.5L203.0 1367L203.5 1354.5L206.5 1354.5L207.5 1367L210.5 1356.5L213.2 1357.5L211.5 1369L215.0 1362.5L217.0 1364Q214.0 1373 210.5 1380Z" fill="#3b32e8" stroke="#3b32e8" stroke-width="1.5" stroke-linejoin="round"/>
<rect x="309.6" y="1351.9" width="74.3" height="30.7" fill="#1c1c1c" rx="15.3" />
<text x="346.7" y="1375.4" font-size="23" fill="#d0d0d0" text-anchor="middle" font-weight="normal"  textLength="58" lengthAdjust="spacingAndGlyphs">Rand</text>
<rect x="393.8" y="1351.9" width="59.9" height="30.7" fill="#1c1c1c" stroke="#111" stroke-width="1.5" />
<text x="423.7" y="1375.4" font-size="23" fill="#d0d0d0" text-anchor="middle" font-weight="normal"  textLength="49" lengthAdjust="spacingAndGlyphs">Map</text>
<circle cx="479.2" cy="1367.2" r="15.3" fill="#1c1c1c" />
<path d="M471.40 1367.20A7.8 7.8 0 0 1 483.67 1360.81" fill="none" stroke="#c8c8c8" stroke-width="2.6" />
<path d="M487.00 1367.20A7.8 7.8 0 0 1 474.73 1373.59" fill="none" stroke="#c8c8c8" stroke-width="2.6" />
<polygon points="466.8,1365.7 476.0,1365.7 471.4,1371.7" fill="#c8c8c8"/>
<polygon points="482.4,1368.7 491.6,1368.7 487.0,1362.7" fill="#c8c8c8"/>
<circle cx="519.6" cy="1367.2" r="15.3" fill="#1c1c1c" />
<path d="M511.6 1359.2H524.1L527.6 1362.7V1375.2H511.6Z" fill="#c8c8c8" />
<rect x="515.6" y="1359.2" width="7" height="5.5" fill="#1c1c1c" />
<circle cx="560.4" cy="1367.2" r="15.3" fill="#1c1c1c" />
<circle cx="553.9" cy="1367.2" r="2.3" fill="#c8c8c8" />
<circle cx="560.4" cy="1367.2" r="2.3" fill="#c8c8c8" />
<circle cx="566.9" cy="1367.2" r="2.3" fill="#c8c8c8" />
<circle cx="47" cy="1413" r="15.3" fill="#f3b063" />
<circle cx="47" cy="1413" r="8.6" fill="none" stroke="#fdf6ec" stroke-width="4.4" />
<line x1="47.50" y1="1413.50" x2="54.50" y2="1420.00" stroke="#fdf6ec" stroke-width="4.4" stroke-linecap="round"/>
<circle cx="47" cy="1454" r="15.3" fill="#1c1c1c" />
<line x1="39.50" y1="1454.00" x2="54.50" y2="1454.00" stroke="#c8c8c8" stroke-width="2.6" />
<line x1="47.00" y1="1446.50" x2="47.00" y2="1461.50" stroke="#c8c8c8" stroke-width="2.6" />
<circle cx="47" cy="1489.3" r="15.3" fill="#1c1c1c" />
<line x1="39.50" y1="1489.30" x2="54.50" y2="1489.30" stroke="#c8c8c8" stroke-width="2.6" />
<circle cx="47" cy="1530.2" r="15.3" fill="#6e6e6e" />
<rect x="38.5" y="1524.7" width="17" height="13" fill="#3a3a3a" rx="2" />
<rect x="43.5" y="1521.7" width="7" height="4" fill="#3a3a3a" rx="1" />
<line x1="43.50" y1="1531.20" x2="50.50" y2="1531.20" stroke="#6e6e6e" stroke-width="2" />
<line x1="47.00" y1="1527.70" x2="47.00" y2="1534.70" stroke="#6e6e6e" stroke-width="2" />
<circle cx="47" cy="1571.5" r="15.3" fill="#f3b063" />
<rect x="37" y="1566.5" width="20" height="10" fill="none" rx="3" stroke="#1a1a1a" stroke-width="3.4" />
<circle cx="47" cy="1612.5" r="15.3" fill="#6e6e6e" />
<line x1="43.00" y1="1607.00" x2="55.50" y2="1607.00" stroke="#3a3a3a" stroke-width="2.4" />
<circle cx="39.5" cy="1607" r="1.4" fill="#3a3a3a" />
<line x1="43.00" y1="1612.50" x2="55.50" y2="1612.50" stroke="#3a3a3a" stroke-width="2.4" />
<circle cx="39.5" cy="1612.5" r="1.4" fill="#3a3a3a" />
<line x1="43.00" y1="1618.00" x2="55.50" y2="1618.00" stroke="#3a3a3a" stroke-width="2.4" />
<circle cx="39.5" cy="1618" r="1.4" fill="#3a3a3a" />
<rect x="72.6" y="1398.2" width="118.5" height="189.4" fill="#363636" rx="3" stroke="#282828" stroke-width="2" />
<rect x="74.1" y="1399.7" width="115.5" height="67.1" fill="#464646" rx="2" />
<text x="131.85" y="1426.4" font-size="24.5" fill="#c8c8c8" text-anchor="middle" font-weight="normal" >Filter</text>
<path d="M114.74 1538.84A28.6 28.6 0 1 1 149.96 1538.84" fill="none" stroke="#161616" stroke-width="4.6" />
<line x1="131.32" y1="1518.01" x2="116.85" y2="1542.10" stroke="#161616" stroke-width="5" stroke-linecap="round"/>
<text x="131.35" y="1565.6" font-size="24.5" fill="#c8c8c8" text-anchor="middle" font-weight="normal" >0</text>
<rect x="197.5" y="1398.2" width="118.5" height="189.4" fill="#363636" rx="3" stroke="#282828" stroke-width="2" />
<rect x="199" y="1399.7" width="115.5" height="67.1" fill="#464646" rx="2" />
<text x="256.75" y="1426.4" font-size="24.5" fill="#c8c8c8" text-anchor="middle" font-weight="normal" >Delay</text>
<path d="M239.64 1538.84A28.6 28.6 0 1 1 274.86 1538.84" fill="none" stroke="#161616" stroke-width="4.6" />
<line x1="256.22" y1="1518.01" x2="241.75" y2="1542.10" stroke="#161616" stroke-width="5" stroke-linecap="round"/>
<text x="256.25" y="1565.6" font-size="24.5" fill="#c8c8c8" text-anchor="middle" font-weight="normal" >0</text>
<rect x="322.4" y="1398.2" width="118.5" height="189.4" fill="#363636" rx="3" stroke="#282828" stroke-width="2" />
<rect x="323.9" y="1399.7" width="115.5" height="67.1" fill="#464646" rx="2" />
<text x="381.65" y="1426.4" font-size="24.5" fill="#c8c8c8" text-anchor="middle" font-weight="normal" >Over</text>
<text x="381.65" y="1452.4" font-size="24.5" fill="#c8c8c8" text-anchor="middle" font-weight="normal" >Drive</text>
<path d="M364.54 1538.84A28.6 28.6 0 1 1 399.76 1538.84" fill="none" stroke="#161616" stroke-width="4.6" />
<path d="M364.54 1538.84A28.6 28.6 0 0 1 359.46 1533.71" fill="none" stroke="#4fc0d8" stroke-width="4.6" />
<line x1="380.56" y1="1517.52" x2="358.27" y2="1534.62" stroke="#161616" stroke-width="5" stroke-linecap="round"/>
<text x="381.15" y="1565.6" font-size="24.5" fill="#c8c8c8" text-anchor="middle" font-weight="normal" >9</text>
<rect x="447.3" y="1398.2" width="118.5" height="189.4" fill="#363636" rx="3" stroke="#282828" stroke-width="2" />
<rect x="448.8" y="1399.7" width="115.5" height="67.1" fill="#464646" rx="2" />
<text x="506.55" y="1426.4" font-size="24.5" fill="#c8c8c8" text-anchor="middle" font-weight="normal" >Saturate</text>
<path d="M489.44 1538.84A28.6 28.6 0 1 1 524.66 1538.84" fill="none" stroke="#161616" stroke-width="4.6" />
<line x1="506.02" y1="1518.01" x2="491.55" y2="1542.10" stroke="#161616" stroke-width="5" stroke-linecap="round"/>
<text x="506.05" y="1565.6" font-size="24.5" fill="#c8c8c8" text-anchor="middle" font-weight="normal" >0</text>
<rect x="72.6" y="1594.8" width="118.5" height="190.2" fill="#363636" rx="3" stroke="#282828" stroke-width="2" />
<rect x="74.1" y="1596.3" width="115.5" height="67.3" fill="#3e3e3e" rx="2" />
<text x="131.85" y="1623.4" font-size="24.5" fill="#fff" text-anchor="middle" font-weight="bold"  textLength="65.9392" lengthAdjust="spacingAndGlyphs">Comp</text>
<path d="M114.74 1735.44A28.6 28.6 0 1 1 149.96 1735.44" fill="none" stroke="#161616" stroke-width="4.6" />
<path d="M114.74 1735.44A28.6 28.6 0 0 1 105.15 1704.06" fill="none" stroke="#4fc0d8" stroke-width="4.6" />
<line x1="130.45" y1="1712.28" x2="103.72" y2="1703.60" stroke="#161616" stroke-width="5" stroke-linecap="round"/>
<text x="131.35" y="1762.9" font-size="24.5" fill="#c8c8c8" text-anchor="middle" font-weight="normal"  textLength="27.7975" lengthAdjust="spacingAndGlyphs">33</text>
<rect x="197.5" y="1594.8" width="118.5" height="190.2" fill="#363636" rx="3" stroke="#282828" stroke-width="2" />
<rect x="199" y="1596.3" width="115.5" height="67.3" fill="#3e3e3e" rx="2" />
<text x="256.75" y="1623.4" font-size="24.5" fill="#fff" text-anchor="middle" font-weight="bold"  textLength="84.0682" lengthAdjust="spacingAndGlyphs">Squash</text>
<path d="M239.64 1735.44A28.6 28.6 0 1 1 274.86 1735.44" fill="none" stroke="#161616" stroke-width="4.6" />
<path d="M239.64 1735.44A28.6 28.6 0 0 1 232.00 1699.47" fill="none" stroke="#4fc0d8" stroke-width="4.6" />
<line x1="255.48" y1="1711.96" x2="230.67" y2="1698.77" stroke="#161616" stroke-width="5" stroke-linecap="round"/>
<text x="256.25" y="1762.9" font-size="24.5" fill="#c8c8c8" text-anchor="middle" font-weight="normal"  textLength="27.7975" lengthAdjust="spacingAndGlyphs">38</text>
<rect x="322.4" y="1594.8" width="118.5" height="190.2" fill="#363636" rx="3" stroke="#282828" stroke-width="2" />
<rect x="323.9" y="1596.3" width="115.5" height="67.3" fill="#808080" rx="2" />
<text x="381.65" y="1623.4" font-size="24.5" fill="#0a0a0a" text-anchor="middle" font-weight="normal"  textLength="104.173" lengthAdjust="spacingAndGlyphs">Low Freq</text>
<path d="M364.54 1735.44A28.6 28.6 0 1 1 399.76 1735.44" fill="none" stroke="#161616" stroke-width="4.6" />
<path d="M364.54 1735.44A28.6 28.6 0 0 1 398.35 1689.33" fill="none" stroke="#4fc0d8" stroke-width="4.6" />
<line x1="383.28" y1="1711.25" x2="399.20" y2="1688.09" stroke="#161616" stroke-width="5" stroke-linecap="round"/>
<text x="381.15" y="1762.9" font-size="24.5" fill="#c8c8c8" text-anchor="middle" font-weight="normal"  textLength="86.1491" lengthAdjust="spacingAndGlyphs">1.28 dB</text>
<rect x="447.3" y="1594.8" width="118.5" height="190.2" fill="#363636" rx="3" stroke="#282828" stroke-width="2" />
<rect x="448.8" y="1596.3" width="115.5" height="67.3" fill="#808080" rx="2" />
<text x="506.55" y="1623.4" font-size="24.5" fill="#0a0a0a" text-anchor="middle" font-weight="normal"  textLength="81.9282" lengthAdjust="spacingAndGlyphs">Hi Freq</text>
<path d="M489.44 1735.44A28.6 28.6 0 1 1 524.66 1735.44" fill="none" stroke="#161616" stroke-width="4.6" />
<path d="M489.44 1735.44A28.6 28.6 0 1 1 526.92 1692.33" fill="none" stroke="#4fc0d8" stroke-width="4.6" />
<line x1="508.44" y1="1711.46" x2="527.96" y2="1691.25" stroke="#161616" stroke-width="5" stroke-linecap="round"/>
<text x="506.05" y="1762.9" font-size="24.5" fill="#c8c8c8" text-anchor="middle" font-weight="normal"  textLength="86.1491" lengthAdjust="spacingAndGlyphs">1.65 dB</text>
<rect x="593" y="1387.6" width="636.1" height="406.4" fill="#363636" />
<circle cx="613.2" cy="1367.2" r="13.8" fill="#f3b063" stroke="#1a1a1a" stroke-width="2.4" />
<text x="639.4" y="1375.7" font-size="23.6" fill="#0a0a0a" text-anchor="start" font-weight="bold"  textLength="113" lengthAdjust="spacingAndGlyphs">Castle Kit</text>
<circle cx="1078.5" cy="1367.2" r="15.3" fill="#1c1c1c" />
<path d="M1069.5 1362.2Q1069.5 1370.2 1074.0 1370.2Q1078.5 1370.2 1078.5 1366.2Q1078.5 1362.2 1083.0 1362.2Q1087.5 1362.2 1087.5 1368.2" fill="none" stroke="#c8c8c8" stroke-width="2.4" />
<line x1="1069.50" y1="1375.20" x2="1087.50" y2="1375.20" stroke="#c8c8c8" stroke-width="2.4" />
<circle cx="1119.4" cy="1367.2" r="15.3" fill="#1c1c1c" />
<path d="M1111.60 1367.20A7.8 7.8 0 0 1 1123.87 1360.81" fill="none" stroke="#c8c8c8" stroke-width="2.6" />
<path d="M1127.20 1367.20A7.8 7.8 0 0 1 1114.93 1373.59" fill="none" stroke="#c8c8c8" stroke-width="2.6" />
<polygon points="1107.0,1365.7 1116.2,1365.7 1111.6,1371.7" fill="#c8c8c8"/>
<polygon points="1122.6,1368.7 1131.8,1368.7 1127.2,1362.7" fill="#c8c8c8"/>
<circle cx="1160.2" cy="1367.2" r="15.3" fill="#1c1c1c" />
<path d="M1152.2 1359.2H1164.7L1168.2 1362.7V1375.2H1152.2Z" fill="#c8c8c8" />
<rect x="1156.2" y="1359.2" width="7" height="5.5" fill="#1c1c1c" />
<circle cx="1201" cy="1367.2" r="15.3" fill="#1c1c1c" />
<circle cx="1194.5" cy="1367.2" r="2.3" fill="#c8c8c8" />
<circle cx="1201" cy="1367.2" r="2.3" fill="#c8c8c8" />
<circle cx="1207.5" cy="1367.2" r="2.3" fill="#c8c8c8" />
<circle cx="613.2" cy="1413" r="15.3" fill="#6e6e6e" />
<circle cx="613.2" cy="1413" r="8.8" fill="none" stroke="#3a3a3a" stroke-width="4.2" />
<line x1="613.20" y1="1413.00" x2="620.20" y2="1419.50" stroke="#3a3a3a" stroke-width="4.2" stroke-linecap="round"/>
<circle cx="613.2" cy="1453.6" r="15.3" fill="#6e6e6e" />
<rect x="604.7" y="1448.1" width="17" height="13" fill="#3a3a3a" rx="2" />
<rect x="609.7" y="1445.1" width="7" height="4" fill="#3a3a3a" rx="1" />
<line x1="609.70" y1="1454.60" x2="616.70" y2="1454.60" stroke="#6e6e6e" stroke-width="2" />
<line x1="613.20" y1="1451.10" x2="613.20" y2="1458.10" stroke="#6e6e6e" stroke-width="2" />
<circle cx="613.2" cy="1494.5" r="15.3" fill="#f3b063" />
<rect x="603.2" y="1489.5" width="20" height="10" fill="none" rx="3" stroke="#1a1a1a" stroke-width="3.4" />
<circle cx="613.2" cy="1535.3" r="15.3" fill="#6e6e6e" />
<line x1="609.20" y1="1529.80" x2="621.70" y2="1529.80" stroke="#3a3a3a" stroke-width="2.4" />
<circle cx="605.7" cy="1529.8" r="1.4" fill="#3a3a3a" />
<line x1="609.20" y1="1535.30" x2="621.70" y2="1535.30" stroke="#3a3a3a" stroke-width="2.4" />
<circle cx="605.7" cy="1535.3" r="1.4" fill="#3a3a3a" />
<line x1="609.20" y1="1540.80" x2="621.70" y2="1540.80" stroke="#3a3a3a" stroke-width="2.4" />
<circle cx="605.7" cy="1540.8" r="1.4" fill="#3a3a3a" />
<rect x="599.5" y="1751.4" width="27.8" height="28.2" fill="#f3b063" stroke="#161616" stroke-width="2" />
<rect x="603.7" y="1762.2" width="2.2" height="6.8" fill="#111" />
<rect x="607.9" y="1762.2" width="2.5" height="6.8" fill="#111" />
<polygon points="613.5,1758.8 613.5,1772.0 622.5,1765.4" fill="#111"/>
<rect x="640.8" y="1400" width="9.4" height="9.2" fill="#454545" />
<rect x="652.9" y="1400" width="9.4" height="9.2" fill="#454545" />
<rect x="665" y="1400" width="9.4" height="9.2" fill="#454545" />
<rect x="677.1" y="1400" width="9.4" height="9.2" fill="#454545" />
<rect x="640.8" y="1411.95" width="9.4" height="9.2" fill="#454545" />
<rect x="652.9" y="1411.95" width="9.4" height="9.2" fill="#454545" />
<rect x="665" y="1411.95" width="9.4" height="9.2" fill="#454545" />
<rect x="677.1" y="1411.95" width="9.4" height="9.2" fill="#454545" />
<rect x="640.8" y="1423.9" width="9.4" height="9.2" fill="#454545" />
<rect x="652.9" y="1423.9" width="9.4" height="9.2" fill="#454545" />
<rect x="665" y="1423.9" width="9.4" height="9.2" fill="#454545" />
<rect x="677.1" y="1423.9" width="9.4" height="9.2" fill="#454545" />
<rect x="640.8" y="1435.85" width="9.4" height="9.2" fill="#6a6a6a" />
<rect x="652.9" y="1435.85" width="9.4" height="9.2" fill="#6a6a6a" />
<rect x="665" y="1435.85" width="9.4" height="9.2" fill="#6a6a6a" />
<rect x="677.1" y="1435.85" width="9.4" height="9.2" fill="#6a6a6a" />
<rect x="640.8" y="1447.8" width="9.4" height="9.2" fill="#6a6a6a" />
<rect x="652.9" y="1447.8" width="9.4" height="9.2" fill="#6a6a6a" />
<rect x="665" y="1447.8" width="9.4" height="9.2" fill="#6a6a6a" />
<rect x="677.1" y="1447.8" width="9.4" height="9.2" fill="#6a6a6a" />
<rect x="640.8" y="1459.75" width="9.4" height="9.2" fill="#6a6a6a" />
<rect x="652.9" y="1459.75" width="9.4" height="9.2" fill="#6a6a6a" />
<rect x="665" y="1459.75" width="9.4" height="9.2" fill="#6a6a6a" />
<rect x="677.1" y="1459.75" width="9.4" height="9.2" fill="#6a6a6a" />
<rect x="640.8" y="1471.7" width="9.4" height="9.2" fill="#6a6a6a" />
<rect x="652.9" y="1471.7" width="9.4" height="9.2" fill="#6a6a6a" />
<rect x="665" y="1471.7" width="9.4" height="9.2" fill="#6a6a6a" />
<rect x="677.1" y="1471.7" width="9.4" height="9.2" fill="#6a6a6a" />
<rect x="640.8" y="1483.65" width="9.4" height="9.2" fill="#454545" />
<rect x="652.9" y="1483.65" width="9.4" height="9.2" fill="#454545" />
<rect x="665" y="1483.65" width="9.4" height="9.2" fill="#454545" />
<rect x="677.1" y="1483.65" width="9.4" height="9.2" fill="#454545" />
<rect x="640.8" y="1495.6" width="9.4" height="9.2" fill="#454545" />
<rect x="652.9" y="1495.6" width="9.4" height="9.2" fill="#454545" />
<rect x="665" y="1495.6" width="9.4" height="9.2" fill="#454545" />
<rect x="677.1" y="1495.6" width="9.4" height="9.2" fill="#454545" />
<rect x="640.8" y="1507.55" width="9.4" height="9.2" fill="#454545" />
<rect x="652.9" y="1507.55" width="9.4" height="9.2" fill="#454545" />
<rect x="665" y="1507.55" width="9.4" height="9.2" fill="#454545" />
<rect x="677.1" y="1507.55" width="9.4" height="9.2" fill="#454545" />
<rect x="640.8" y="1519.5" width="9.4" height="9.2" fill="#454545" />
<rect x="652.9" y="1519.5" width="9.4" height="9.2" fill="#454545" />
<rect x="665" y="1519.5" width="9.4" height="9.2" fill="#454545" />
<rect x="677.1" y="1519.5" width="9.4" height="9.2" fill="#454545" />
<rect x="640.8" y="1531.45" width="9.4" height="9.2" fill="#6a6a6a" />
<rect x="652.9" y="1531.45" width="9.4" height="9.2" fill="#6a6a6a" />
<rect x="665" y="1531.45" width="9.4" height="9.2" fill="#6a6a6a" />
<rect x="677.1" y="1531.45" width="9.4" height="9.2" fill="#6a6a6a" />
<rect x="640.8" y="1543.4" width="9.4" height="9.2" fill="#6a6a6a" />
<rect x="652.9" y="1543.4" width="9.4" height="9.2" fill="#6a6a6a" />
<rect x="665" y="1543.4" width="9.4" height="9.2" fill="#6a6a6a" />
<rect x="677.1" y="1543.4" width="9.4" height="9.2" fill="#6a6a6a" />
<rect x="640.8" y="1555.35" width="9.4" height="9.2" fill="#6a6a6a" />
<rect x="652.9" y="1555.35" width="9.4" height="9.2" fill="#6a6a6a" />
<rect x="665" y="1555.35" width="9.4" height="9.2" fill="#6a6a6a" />
<rect x="677.1" y="1555.35" width="9.4" height="9.2" fill="#6a6a6a" />
<rect x="640.8" y="1567.3" width="9.4" height="9.2" fill="#6a6a6a" />
<rect x="652.9" y="1567.3" width="9.4" height="9.2" fill="#6a6a6a" />
<rect x="665" y="1567.3" width="9.4" height="9.2" fill="#6a6a6a" />
<rect x="677.1" y="1567.3" width="9.4" height="9.2" fill="#6a6a6a" />
<rect x="640.8" y="1579.25" width="9.4" height="9.2" fill="#454545" />
<rect x="652.9" y="1579.25" width="9.4" height="9.2" fill="#454545" />
<rect x="665" y="1579.25" width="9.4" height="9.2" fill="#454545" />
<rect x="677.1" y="1579.25" width="9.4" height="9.2" fill="#454545" />
<rect x="640.8" y="1591.2" width="9.4" height="9.2" fill="#454545" />
<rect x="652.9" y="1591.2" width="9.4" height="9.2" fill="#454545" />
<rect x="665" y="1591.2" width="9.4" height="9.2" fill="#454545" />
<rect x="677.1" y="1591.2" width="9.4" height="9.2" fill="#454545" />
<rect x="640.8" y="1603.15" width="9.4" height="9.2" fill="#454545" />
<rect x="652.9" y="1603.15" width="9.4" height="9.2" fill="#454545" />
<rect x="665" y="1603.15" width="9.4" height="9.2" fill="#454545" />
<rect x="677.1" y="1603.15" width="9.4" height="9.2" fill="#454545" />
<rect x="640.8" y="1615.1" width="9.4" height="9.2" fill="#454545" />
<rect x="652.9" y="1615.1" width="9.4" height="9.2" fill="#454545" />
<rect x="665" y="1615.1" width="9.4" height="9.2" fill="#454545" />
<rect x="677.1" y="1615.1" width="9.4" height="9.2" fill="#454545" />
<rect x="640.8" y="1627.05" width="9.4" height="9.2" fill="#b8b8b8" />
<rect x="652.9" y="1627.05" width="9.4" height="9.2" fill="#f3b063" />
<rect x="665" y="1627.05" width="9.4" height="9.2" fill="#b8b8b8" />
<rect x="677.1" y="1627.05" width="9.4" height="9.2" fill="#b8b8b8" />
<rect x="640.8" y="1639" width="9.4" height="9.2" fill="#b8b8b8" />
<rect x="652.9" y="1639" width="9.4" height="9.2" fill="#b8b8b8" />
<rect x="665" y="1639" width="9.4" height="9.2" fill="#b8b8b8" />
<rect x="677.1" y="1639" width="9.4" height="9.2" fill="#b8b8b8" />
<rect x="640.8" y="1650.95" width="9.4" height="9.2" fill="#b8b8b8" />
<rect x="652.9" y="1650.95" width="9.4" height="9.2" fill="#b8b8b8" />
<rect x="665" y="1650.95" width="9.4" height="9.2" fill="#f3b063" />
<rect x="677.1" y="1650.95" width="9.4" height="9.2" fill="#b8b8b8" />
<rect x="640.8" y="1662.9" width="9.4" height="9.2" fill="#b8b8b8" />
<rect x="652.9" y="1662.9" width="9.4" height="9.2" fill="#f3b063" />
<rect x="665" y="1662.9" width="9.4" height="9.2" fill="#b8b8b8" />
<rect x="677.1" y="1662.9" width="9.4" height="9.2" fill="#b8b8b8" />
<rect x="640.8" y="1674.85" width="9.4" height="9.2" fill="#454545" />
<rect x="652.9" y="1674.85" width="9.4" height="9.2" fill="#454545" />
<rect x="665" y="1674.85" width="9.4" height="9.2" fill="#454545" />
<rect x="677.1" y="1674.85" width="9.4" height="9.2" fill="#454545" />
<rect x="640.8" y="1686.8" width="9.4" height="9.2" fill="#454545" />
<rect x="652.9" y="1686.8" width="9.4" height="9.2" fill="#454545" />
<rect x="665" y="1686.8" width="9.4" height="9.2" fill="#454545" />
<rect x="677.1" y="1686.8" width="9.4" height="9.2" fill="#454545" />
<rect x="640.8" y="1698.75" width="9.4" height="9.2" fill="#454545" />
<rect x="652.9" y="1698.75" width="9.4" height="9.2" fill="#454545" />
<rect x="665" y="1698.75" width="9.4" height="9.2" fill="#454545" />
<rect x="677.1" y="1698.75" width="9.4" height="9.2" fill="#454545" />
<rect x="640.8" y="1710.7" width="9.4" height="9.2" fill="#454545" />
<rect x="652.9" y="1710.7" width="9.4" height="9.2" fill="#454545" />
<rect x="665" y="1710.7" width="9.4" height="9.2" fill="#454545" />
<rect x="677.1" y="1710.7" width="9.4" height="9.2" fill="#454545" />
<rect x="640.8" y="1722.65" width="9.4" height="9.2" fill="#6a6a6a" />
<rect x="652.9" y="1722.65" width="9.4" height="9.2" fill="#6a6a6a" />
<rect x="665" y="1722.65" width="9.4" height="9.2" fill="#6a6a6a" />
<rect x="677.1" y="1722.65" width="9.4" height="9.2" fill="#6a6a6a" />
<rect x="640.8" y="1734.6" width="9.4" height="9.2" fill="#6a6a6a" />
<rect x="652.9" y="1734.6" width="9.4" height="9.2" fill="#6a6a6a" />
<rect x="665" y="1734.6" width="9.4" height="9.2" fill="#6a6a6a" />
<rect x="677.1" y="1734.6" width="9.4" height="9.2" fill="#6a6a6a" />
<rect x="640.8" y="1746.55" width="9.4" height="9.2" fill="#6a6a6a" />
<rect x="652.9" y="1746.55" width="9.4" height="9.2" fill="#6a6a6a" />
<rect x="665" y="1746.55" width="9.4" height="9.2" fill="#6a6a6a" />
<rect x="677.1" y="1746.55" width="9.4" height="9.2" fill="#6a6a6a" />
<rect x="640.8" y="1758.5" width="9.4" height="9.2" fill="#6a6a6a" />
<rect x="652.9" y="1758.5" width="9.4" height="9.2" fill="#6a6a6a" />
<rect x="665" y="1758.5" width="9.4" height="9.2" fill="#6a6a6a" />
<rect x="677.1" y="1758.5" width="9.4" height="9.2" fill="#6a6a6a" />
<rect x="640.8" y="1770.45" width="9.4" height="9.2" fill="#454545" />
<rect x="652.9" y="1770.45" width="9.4" height="9.2" fill="#454545" />
<rect x="665" y="1770.45" width="9.4" height="9.2" fill="#454545" />
<rect x="677.1" y="1770.45" width="9.4" height="9.2" fill="#454545" />
<rect x="639.4" y="1626.6" width="48.2" height="48" fill="none" stroke="#1a1a1a" stroke-width="2" />
<rect x="694.3" y="1398.5" width="126" height="91.5" fill="#282828" rx="3" />
<rect x="695.8" y="1400" width="123" height="54.4" fill="#bcbcbc" />
<text x="757.3" y="1423.4" font-size="23.5" fill="#0a0a0a" text-anchor="middle" font-weight="normal"  textLength="102.015" lengthAdjust="spacingAndGlyphs">Kick Sub</text>
<text x="757.3" y="1447.5" font-size="23.5" fill="#0a0a0a" text-anchor="middle" font-weight="normal"  textLength="70.4089" lengthAdjust="spacingAndGlyphs">Drone</text>
<rect x="695.8" y="1457.7" width="39.5" height="30.8" fill="#363636" />
<rect x="737.3" y="1457.7" width="41" height="30.8" fill="#363636" />
<rect x="780.3" y="1457.7" width="38.5" height="30.8" fill="#363636" />
<text x="713.5" y="1481.7" font-size="23.5" fill="#c2c2c2" text-anchor="middle" font-weight="normal" >M</text>
<text x="798.7" y="1481.7" font-size="23.5" fill="#c2c2c2" text-anchor="middle" font-weight="normal" >S</text>
<polygon points="748.8,1462.3 748.8,1484.1 766.8,1473.2" fill="#585858"/>
<rect x="826.4" y="1398.5" width="126" height="91.5" fill="#282828" rx="3" />
<rect x="827.9" y="1400" width="123" height="54.4" fill="#bcbcbc" />
<text x="889.4" y="1423.4" font-size="23.5" fill="#0a0a0a" text-anchor="middle" font-weight="normal"  textLength="43.1311" lengthAdjust="spacingAndGlyphs">808</text>
<text x="889.4" y="1447.5" font-size="23.5" fill="#0a0a0a" text-anchor="middle" font-weight="normal"  textLength="97.6968" lengthAdjust="spacingAndGlyphs">Oracle 3</text>
<rect x="827.9" y="1457.7" width="39.5" height="30.8" fill="#363636" />
<rect x="869.4" y="1457.7" width="41" height="30.8" fill="#363636" />
<rect x="912.4" y="1457.7" width="38.5" height="30.8" fill="#363636" />
<text x="845.6" y="1481.7" font-size="23.5" fill="#c2c2c2" text-anchor="middle" font-weight="normal" >M</text>
<text x="930.8" y="1481.7" font-size="23.5" fill="#c2c2c2" text-anchor="middle" font-weight="normal" >S</text>
<polygon points="880.9,1462.3 880.9,1484.1 898.9,1473.2" fill="#f3b063"/>
<rect x="958.5" y="1398.5" width="126" height="91.5" fill="#282828" rx="3" />
<rect x="960" y="1400" width="123" height="54.4" fill="#bcbcbc" />
<text x="1021.5" y="1423.4" font-size="23.5" fill="#0a0a0a" text-anchor="middle" font-weight="normal"  textLength="103.479" lengthAdjust="spacingAndGlyphs">Ride 808</text>
<text x="1021.5" y="1447.5" font-size="23.5" fill="#0a0a0a" text-anchor="middle" font-weight="normal"  textLength="57.5082" lengthAdjust="spacingAndGlyphs">Long</text>
<rect x="960" y="1457.7" width="39.5" height="30.8" fill="#363636" />
<rect x="1001.5" y="1457.7" width="41" height="30.8" fill="#363636" />
<rect x="1044.5" y="1457.7" width="38.5" height="30.8" fill="#363636" />
<text x="977.7" y="1481.7" font-size="23.5" fill="#c2c2c2" text-anchor="middle" font-weight="normal" >M</text>
<text x="1062.9" y="1481.7" font-size="23.5" fill="#c2c2c2" text-anchor="middle" font-weight="normal" >S</text>
<polygon points="1013.0,1462.3 1013.0,1484.1 1031.0,1473.2" fill="#585858"/>
<rect x="1090.6" y="1398.5" width="126" height="91.5" fill="#282828" rx="3" />
<rect x="1092.1" y="1400" width="123" height="54.4" fill="#bcbcbc" />
<text x="1153.6" y="1423.4" font-size="23.5" fill="#0a0a0a" text-anchor="middle" font-weight="normal"  textLength="68.9569" lengthAdjust="spacingAndGlyphs">Crash</text>
<text x="1153.6" y="1447.5" font-size="23.5" fill="#0a0a0a" text-anchor="middle" font-weight="normal"  textLength="106.32" lengthAdjust="spacingAndGlyphs">Marching</text>
<rect x="1092.1" y="1457.7" width="39.5" height="30.8" fill="#363636" />
<rect x="1133.6" y="1457.7" width="41" height="30.8" fill="#363636" />
<rect x="1176.6" y="1457.7" width="38.5" height="30.8" fill="#363636" />
<text x="1109.8" y="1481.7" font-size="23.5" fill="#c2c2c2" text-anchor="middle" font-weight="normal" >M</text>
<text x="1195" y="1481.7" font-size="23.5" fill="#c2c2c2" text-anchor="middle" font-weight="normal" >S</text>
<polygon points="1145.1,1462.3 1145.1,1484.1 1163.1,1473.2" fill="#585858"/>
<rect x="694.3" y="1496.57" width="126" height="91.5" fill="#282828" rx="3" />
<rect x="695.8" y="1498.07" width="123" height="54.4" fill="#bcbcbc" />
<text x="757.3" y="1521.5" font-size="23.5" fill="#0a0a0a" text-anchor="middle" font-weight="normal"  textLength="89.1017" lengthAdjust="spacingAndGlyphs">Cabasa</text>
<text x="757.3" y="1545.6" font-size="23.5" fill="#0a0a0a" text-anchor="middle" font-weight="normal"  textLength="110.624" lengthAdjust="spacingAndGlyphs">Short Mid</text>
<rect x="695.8" y="1555.77" width="39.5" height="30.8" fill="#363636" />
<rect x="737.3" y="1555.77" width="41" height="30.8" fill="#363636" />
<rect x="780.3" y="1555.77" width="38.5" height="30.8" fill="#363636" />
<text x="713.5" y="1579.8" font-size="23.5" fill="#c2c2c2" text-anchor="middle" font-weight="normal" >M</text>
<text x="798.7" y="1579.8" font-size="23.5" fill="#c2c2c2" text-anchor="middle" font-weight="normal" >S</text>
<polygon points="748.8,1560.4 748.8,1582.2 766.8,1571.3" fill="#585858"/>
<rect x="826.4" y="1496.57" width="126" height="91.5" fill="#282828" rx="3" />
<rect x="827.9" y="1498.07" width="123" height="54.4" fill="#bcbcbc" />
<text x="889.4" y="1521.5" font-size="23.5" fill="#0a0a0a" text-anchor="middle" font-weight="normal"  textLength="87.6376" lengthAdjust="spacingAndGlyphs">Tom Sp</text>
<text x="889.4" y="1545.6" font-size="23.5" fill="#0a0a0a" text-anchor="middle" font-weight="normal"  textLength="97.6968" lengthAdjust="spacingAndGlyphs">Acoustic</text>
<rect x="827.9" y="1555.77" width="39.5" height="30.8" fill="#363636" />
<rect x="869.4" y="1555.77" width="41" height="30.8" fill="#363636" />
<rect x="912.4" y="1555.77" width="38.5" height="30.8" fill="#363636" />
<text x="845.6" y="1579.8" font-size="23.5" fill="#c2c2c2" text-anchor="middle" font-weight="normal" >M</text>
<text x="930.8" y="1579.8" font-size="23.5" fill="#c2c2c2" text-anchor="middle" font-weight="normal" >S</text>
<polygon points="880.9,1560.4 880.9,1582.2 898.9,1571.3" fill="#585858"/>
<rect x="958.5" y="1496.57" width="126" height="91.5" fill="#282828" rx="3" />
<rect x="960" y="1498.07" width="123" height="54.4" fill="#bcbcbc" />
<text x="1021.5" y="1521.5" font-size="23.5" fill="#0a0a0a" text-anchor="middle" font-weight="normal"  textLength="110.66" lengthAdjust="spacingAndGlyphs">Hihat 808</text>
<text x="1021.5" y="1545.6" font-size="23.5" fill="#0a0a0a" text-anchor="middle" font-weight="normal"  textLength="63.2376" lengthAdjust="spacingAndGlyphs">Open</text>
<rect x="960" y="1555.77" width="39.5" height="30.8" fill="#363636" />
<rect x="1001.5" y="1555.77" width="41" height="30.8" fill="#363636" />
<rect x="1044.5" y="1555.77" width="38.5" height="30.8" fill="#363636" />
<text x="977.7" y="1579.8" font-size="23.5" fill="#c2c2c2" text-anchor="middle" font-weight="normal" >M</text>
<text x="1062.9" y="1579.8" font-size="23.5" fill="#c2c2c2" text-anchor="middle" font-weight="normal" >S</text>
<polygon points="1013.0,1560.4 1013.0,1582.2 1031.0,1571.3" fill="#585858"/>
<rect x="1090.6" y="1496.57" width="126" height="91.5" fill="#282828" rx="3" />
<rect x="1092.1" y="1498.07" width="123" height="54.4" fill="#bcbcbc" />
<text x="1153.6" y="1521.5" font-size="23.5" fill="#0a0a0a" text-anchor="middle" font-weight="normal"  textLength="63.2396" lengthAdjust="spacingAndGlyphs">Vocal</text>
<text x="1153.6" y="1545.6" font-size="23.5" fill="#0a0a0a" text-anchor="middle" font-weight="normal"  textLength="67.5553" lengthAdjust="spacingAndGlyphs">Shout</text>
<rect x="1092.1" y="1555.77" width="39.5" height="30.8" fill="#363636" />
<rect x="1133.6" y="1555.77" width="41" height="30.8" fill="#363636" />
<rect x="1176.6" y="1555.77" width="38.5" height="30.8" fill="#363636" />
<text x="1109.8" y="1579.8" font-size="23.5" fill="#c2c2c2" text-anchor="middle" font-weight="normal" >M</text>
<text x="1195" y="1579.8" font-size="23.5" fill="#c2c2c2" text-anchor="middle" font-weight="normal" >S</text>
<polygon points="1145.1,1560.4 1145.1,1582.2 1163.1,1571.3" fill="#585858"/>
<rect x="694.3" y="1594.64" width="126" height="91.5" fill="#282828" rx="3" />
<rect x="695.8" y="1596.14" width="123" height="54.4" fill="#bcbcbc" />
<text x="757.3" y="1619.5" font-size="23.5" fill="#0a0a0a" text-anchor="middle" font-weight="normal"  textLength="119.296" lengthAdjust="spacingAndGlyphs">Snare 808</text>
<text x="757.3" y="1643.6" font-size="23.5" fill="#0a0a0a" text-anchor="middle" font-weight="normal"  textLength="105.371" lengthAdjust="spacingAndGlyphs">Tight Lite</text>
<rect x="695.8" y="1653.84" width="39.5" height="30.8" fill="#363636" />
<rect x="737.3" y="1653.84" width="41" height="30.8" fill="#363636" />
<rect x="780.3" y="1653.84" width="38.5" height="30.8" fill="#363636" />
<text x="713.5" y="1677.8" font-size="23.5" fill="#c2c2c2" text-anchor="middle" font-weight="normal" >M</text>
<text x="798.7" y="1677.8" font-size="23.5" fill="#c2c2c2" text-anchor="middle" font-weight="normal" >S</text>
<polygon points="748.8,1658.4 748.8,1680.2 766.8,1669.3" fill="#585858"/>
<rect x="826.4" y="1594.64" width="126" height="91.5" fill="#282828" rx="3" />
<rect x="827.9" y="1596.14" width="123" height="54.4" fill="#bcbcbc" />
<text x="889.4" y="1619.5" font-size="23.5" fill="#0a0a0a" text-anchor="middle" font-weight="normal"  textLength="45.9464" lengthAdjust="spacingAndGlyphs">Rim</text>
<text x="889.4" y="1643.6" font-size="23.5" fill="#0a0a0a" text-anchor="middle" font-weight="normal"  textLength="86.2501" lengthAdjust="spacingAndGlyphs">Voltage</text>
<rect x="827.9" y="1653.84" width="39.5" height="30.8" fill="#363636" />
<rect x="869.4" y="1653.84" width="41" height="30.8" fill="#363636" />
<rect x="912.4" y="1653.84" width="38.5" height="30.8" fill="#363636" />
<text x="845.6" y="1677.8" font-size="23.5" fill="#c2c2c2" text-anchor="middle" font-weight="normal" >M</text>
<text x="930.8" y="1677.8" font-size="23.5" fill="#c2c2c2" text-anchor="middle" font-weight="normal" >S</text>
<polygon points="880.9,1658.4 880.9,1680.2 898.9,1669.3" fill="#585858"/>
<rect x="958.5" y="1594.64" width="126" height="91.5" fill="#282828" rx="3" />
<rect x="960" y="1596.14" width="123" height="54.4" fill="#bcbcbc" />
<text x="1021.5" y="1619.5" font-size="23.5" fill="#0a0a0a" text-anchor="middle" font-weight="normal"  textLength="110.66" lengthAdjust="spacingAndGlyphs">Hihat 808</text>
<text x="1021.5" y="1643.6" font-size="23.5" fill="#0a0a0a" text-anchor="middle" font-weight="normal"  textLength="61.7876" lengthAdjust="spacingAndGlyphs">Short</text>
<rect x="960" y="1653.84" width="39.5" height="30.8" fill="#363636" />
<rect x="1001.5" y="1653.84" width="41" height="30.8" fill="#363636" />
<rect x="1044.5" y="1653.84" width="38.5" height="30.8" fill="#363636" />
<text x="977.7" y="1677.8" font-size="23.5" fill="#c2c2c2" text-anchor="middle" font-weight="normal" >M</text>
<text x="1062.9" y="1677.8" font-size="23.5" fill="#c2c2c2" text-anchor="middle" font-weight="normal" >S</text>
<polygon points="1013.0,1658.4 1013.0,1680.2 1031.0,1669.3" fill="#f3b063"/>
<rect x="1090.6" y="1594.64" width="126" height="91.5" fill="#282828" rx="3" />
<rect x="1092.1" y="1596.14" width="123" height="54.4" fill="#bcbcbc" />
<text x="1153.6" y="1619.5" font-size="23.5" fill="#0a0a0a" text-anchor="middle" font-weight="normal"  textLength="63.2396" lengthAdjust="spacingAndGlyphs">Vocal</text>
<text x="1153.6" y="1643.6" font-size="23.5" fill="#0a0a0a" text-anchor="middle" font-weight="normal"  textLength="67.5553" lengthAdjust="spacingAndGlyphs">Shout</text>
<rect x="1092.1" y="1653.84" width="39.5" height="30.8" fill="#363636" />
<rect x="1133.6" y="1653.84" width="41" height="30.8" fill="#363636" />
<rect x="1176.6" y="1653.84" width="38.5" height="30.8" fill="#363636" />
<text x="1109.8" y="1677.8" font-size="23.5" fill="#c2c2c2" text-anchor="middle" font-weight="normal" >M</text>
<text x="1195" y="1677.8" font-size="23.5" fill="#c2c2c2" text-anchor="middle" font-weight="normal" >S</text>
<polygon points="1145.1,1658.4 1145.1,1680.2 1163.1,1669.3" fill="#585858"/>
<rect x="694.3" y="1692.71" width="126" height="91.5" fill="#282828" rx="3" />
<rect x="695.8" y="1694.21" width="123" height="54.4" fill="#bcbcbc" />
<text x="757.3" y="1717.6" font-size="23.5" fill="#0a0a0a" text-anchor="middle" font-weight="normal"  textLength="107.746" lengthAdjust="spacingAndGlyphs">Kick Trap</text>
<text x="757.3" y="1741.7" font-size="23.5" fill="#0a0a0a" text-anchor="middle" font-weight="normal"  textLength="58.9218" lengthAdjust="spacingAndGlyphs">Thud</text>
<rect x="695.8" y="1751.91" width="39.5" height="30.8" fill="#363636" />
<rect x="737.3" y="1751.91" width="41" height="30.8" fill="#363636" />
<rect x="780.3" y="1751.91" width="38.5" height="30.8" fill="#363636" />
<text x="713.5" y="1775.9" font-size="23.5" fill="#c2c2c2" text-anchor="middle" font-weight="normal" >M</text>
<text x="798.7" y="1775.9" font-size="23.5" fill="#c2c2c2" text-anchor="middle" font-weight="normal" >S</text>
<polygon points="748.8,1756.5 748.8,1778.3 766.8,1767.4" fill="#585858"/>
<rect x="826.4" y="1692.71" width="126" height="91.5" fill="#282828" rx="3" />
<rect x="827.9" y="1694.21" width="123" height="54.4" fill="#667c86" />
<text x="889.4" y="1717.6" font-size="23.5" fill="#0a0a0a" text-anchor="middle" font-weight="normal"  textLength="103.479" lengthAdjust="spacingAndGlyphs">Clap 808</text>
<text x="889.4" y="1741.7" font-size="23.5" fill="#0a0a0a" text-anchor="middle" font-weight="normal"  textLength="56.0561" lengthAdjust="spacingAndGlyphs">Light</text>
<rect x="827.9" y="1751.91" width="39.5" height="30.8" fill="#363636" />
<rect x="869.4" y="1751.91" width="41" height="30.8" fill="#363636" />
<rect x="912.4" y="1751.91" width="38.5" height="30.8" fill="#363636" />
<text x="845.6" y="1775.9" font-size="23.5" fill="#c2c2c2" text-anchor="middle" font-weight="normal" >M</text>
<text x="930.8" y="1775.9" font-size="23.5" fill="#c2c2c2" text-anchor="middle" font-weight="normal" >S</text>
<polygon points="880.9,1756.5 880.9,1778.3 898.9,1767.4" fill="#f3b063"/>
<rect x="958.5" y="1692.71" width="126" height="91.5" fill="#282828" rx="3" />
<rect x="960" y="1694.21" width="123" height="54.4" fill="#bcbcbc" />
<text x="1021.5" y="1717.6" font-size="23.5" fill="#0a0a0a" text-anchor="middle" font-weight="normal"  textLength="119.296" lengthAdjust="spacingAndGlyphs">Snare 808</text>
<text x="1021.5" y="1741.7" font-size="23.5" fill="#0a0a0a" text-anchor="middle" font-weight="normal"  textLength="61.7997" lengthAdjust="spacingAndGlyphs">Deep</text>
<rect x="960" y="1751.91" width="39.5" height="30.8" fill="#363636" />
<rect x="1001.5" y="1751.91" width="41" height="30.8" fill="#363636" />
<rect x="1044.5" y="1751.91" width="38.5" height="30.8" fill="#363636" />
<text x="977.7" y="1775.9" font-size="23.5" fill="#c2c2c2" text-anchor="middle" font-weight="normal" >M</text>
<text x="1062.9" y="1775.9" font-size="23.5" fill="#c2c2c2" text-anchor="middle" font-weight="normal" >S</text>
<polygon points="1013.0,1756.5 1013.0,1778.3 1031.0,1767.4" fill="#585858"/>
<rect x="1090.6" y="1692.71" width="126" height="91.5" fill="#282828" rx="3" />
<rect x="1092.1" y="1694.21" width="123" height="54.4" fill="#bcbcbc" />
<text x="1153.6" y="1717.6" font-size="23.5" fill="#0a0a0a" text-anchor="middle" font-weight="normal"  textLength="119.296" lengthAdjust="spacingAndGlyphs">Snare 808</text>
<text x="1153.6" y="1741.7" font-size="23.5" fill="#0a0a0a" text-anchor="middle" font-weight="normal"  textLength="56.0561" lengthAdjust="spacingAndGlyphs">Light</text>
<rect x="1092.1" y="1751.91" width="39.5" height="30.8" fill="#363636" />
<rect x="1133.6" y="1751.91" width="41" height="30.8" fill="#363636" />
<rect x="1176.6" y="1751.91" width="38.5" height="30.8" fill="#363636" />
<text x="1109.8" y="1775.9" font-size="23.5" fill="#c2c2c2" text-anchor="middle" font-weight="normal" >M</text>
<text x="1195" y="1775.9" font-size="23.5" fill="#c2c2c2" text-anchor="middle" font-weight="normal" >S</text>
<polygon points="1145.1,1756.5 1145.1,1778.3 1163.1,1767.4" fill="#585858"/>
<rect x="1233.6" y="1387.5" width="1724" height="406.5" fill="#363636" />
<circle cx="1256.7" cy="1367.2" r="13.8" fill="#f3b063" stroke="#1a1a1a" stroke-width="2.4" />
<circle cx="1294.8" cy="1367.2" r="15.3" fill="#1c1c1c" />
<polygon points="1289.0,1358.7 1289.0,1375.7 1304.0,1367.2" fill="#b5b5b5"/>
<text x="1321" y="1375.7" font-size="23.6" fill="#0a0a0a" text-anchor="start" font-weight="bold"  textLength="237" lengthAdjust="spacingAndGlyphs">Clap 808 Light Quick</text>
<path d="M2579 1389Q2583 1388 2583 1382V1358Q2583 1352 2589 1352H2693.5Q2699.5 1352 2699.5 1358V1382Q2699.5 1388 2704 1389Z" fill="#363636" />
<text x="2641.2" y="1375.6" font-size="23.5" fill="#d0d0d0" text-anchor="middle" font-weight="normal"  textLength="84" lengthAdjust="spacingAndGlyphs">Sample</text>
<rect x="2705.8" y="1353" width="124" height="29.8" fill="#3a3a3a" rx="5" />
<text x="2767.8" y="1375.6" font-size="23.5" fill="#d0d0d0" text-anchor="middle" font-weight="normal"  textLength="100" lengthAdjust="spacingAndGlyphs">Controls</text>
<circle cx="2857.2" cy="1367.2" r="15.3" fill="#1c1c1c" />
<path d="M2849.40 1367.20A7.8 7.8 0 0 1 2861.67 1360.81" fill="none" stroke="#c8c8c8" stroke-width="2.6" />
<path d="M2865.00 1367.20A7.8 7.8 0 0 1 2852.73 1373.59" fill="none" stroke="#c8c8c8" stroke-width="2.6" />
<polygon points="2844.8,1365.7 2854.0,1365.7 2849.4,1371.7" fill="#c8c8c8"/>
<polygon points="2860.4,1368.7 2869.6,1368.7 2865.0,1362.7" fill="#c8c8c8"/>
<circle cx="2895.5" cy="1367.2" r="15.3" fill="#1c1c1c" />
<path d="M2887.5 1359.2H2900.0L2903.5 1362.7V1375.2H2887.5Z" fill="#c8c8c8" />
<rect x="2891.5" y="1359.2" width="7" height="5.5" fill="#1c1c1c" />
<circle cx="2934.2" cy="1367.2" r="15.3" fill="#1c1c1c" />
<circle cx="2927.7" cy="1367.2" r="2.3" fill="#c8c8c8" />
<circle cx="2934.2" cy="1367.2" r="2.3" fill="#c8c8c8" />
<circle cx="2940.7" cy="1367.2" r="2.3" fill="#c8c8c8" />
<path d="M1241 1696.7V1401Q1241 1395 1247 1395H2949.6V1696.7Z" fill="#161616" />
<line x1="1338.40" y1="1395.00" x2="1338.40" y2="1696.70" stroke="#3e3e3e" stroke-width="1.6" />
<line x1="1241.00" y1="1494.00" x2="1338.40" y2="1494.00" stroke="#3e3e3e" stroke-width="1.6" />
<line x1="1241.00" y1="1593.00" x2="1338.40" y2="1593.00" stroke="#3e3e3e" stroke-width="1.6" />
<rect x="1241.5" y="1495" width="98.5" height="97" fill="#161616" />
<path d="M1283.21 1433.89A9 9 0 1 1 1295.89 1432.79" fill="none" stroke="#8e8e8e" stroke-width="2.6" />
<polygon points="1296.4,1429.9 1296.4,1439.9 1305.4,1434.9" fill="#8e8e8e"/>
<text x="1290" y="1471.3" font-size="24" fill="#8e8e8e" text-anchor="middle" font-weight="normal"  textLength="70.6" lengthAdjust="spacingAndGlyphs">Classic</text>
<line x1="1279.50" y1="1517.00" x2="1279.50" y2="1539.00" stroke="#f3b063" stroke-width="2.6" />
<line x1="1279.50" y1="1528.00" x2="1297.00" y2="1528.00" stroke="#f3b063" stroke-width="2.6" />
<polygon points="1293.0,1522.5 1293.0,1533.5 1301.0,1528.0" fill="#f3b063"/>
<text x="1290" y="1572.3" font-size="24" fill="#f3b063" text-anchor="middle" font-weight="normal"  textLength="64.4" lengthAdjust="spacingAndGlyphs">1-Shot</text>
<line x1="1280.00" y1="1618.00" x2="1280.00" y2="1640.00" stroke="#8e8e8e" stroke-width="1.8" />
<line x1="1285.10" y1="1618.00" x2="1285.10" y2="1640.00" stroke="#8e8e8e" stroke-width="1.8" />
<line x1="1290.20" y1="1618.00" x2="1290.20" y2="1640.00" stroke="#8e8e8e" stroke-width="1.8" />
<line x1="1295.30" y1="1618.00" x2="1295.30" y2="1640.00" stroke="#8e8e8e" stroke-width="1.8" />
<line x1="1300.40" y1="1618.00" x2="1300.40" y2="1640.00" stroke="#8e8e8e" stroke-width="1.8" />
<text x="1290" y="1672.3" font-size="24" fill="#8e8e8e" text-anchor="middle" font-weight="normal"  textLength="46" lengthAdjust="spacingAndGlyphs">Slice</text>
<rect x="1350.8" y="1404.5" width="1591.2" height="208.5" fill="#2d5f6a" />
<rect x="2834.3" y="1404.5" width="107.7" height="208.5" fill="#244a52" />
<line x1="1352.00" y1="1509.10" x2="2834.30" y2="1509.10" stroke="#f3b063" stroke-width="1.6" />
<line x1="2834.30" y1="1509.10" x2="2942.00" y2="1509.10" stroke="#7a8a8e" stroke-width="1.4" />
<polygon points="1352.0,1505.7 1353.7,1508.1 1355.4,1508.1 1357.1,1508.1 1358.8,1508.1 1360.5,1508.1 1362.2,1508.1 1363.9,1508.1 1365.6,1508.1 1367.3,1508.1 1369.0,1508.1 1370.7,1508.1 1372.4,1508.1 1374.1,1508.1 1375.8,1508.1 1377.5,1508.1 1379.2,1508.1 1380.9,1508.1 1382.6,1500.9 1384.3,1493.9 1386.0,1480.3 1387.7,1476.7 1389.4,1481.2 1391.1,1474.4 1392.8,1483.0 1394.5,1483.3 1396.2,1474.2 1397.9,1470.3 1399.6,1478.1 1401.3,1487.2 1403.0,1485.3 1404.7,1491.4 1406.4,1494.0 1408.1,1486.8 1409.8,1482.4 1411.5,1479.2 1413.2,1476.5 1414.9,1463.5 1416.6,1464.3 1418.3,1474.9 1420.0,1476.3 1421.7,1469.0 1423.4,1468.8 1425.1,1468.1 1426.8,1483.9 1428.5,1469.4 1430.2,1468.3 1431.9,1482.8 1433.6,1471.5 1435.3,1482.6 1437.0,1470.1 1438.7,1484.5 1440.4,1486.1 1442.1,1478.6 1443.8,1483.4 1445.5,1489.3 1447.2,1489.9 1448.9,1489.8 1450.6,1488.5 1452.3,1479.4 1454.0,1486.9 1455.7,1487.5 1457.4,1479.2 1459.1,1486.0 1460.8,1469.1 1462.5,1436.3 1464.2,1448.1 1465.9,1454.9 1467.6,1449.9 1469.3,1445.7 1471.0,1426.5 1472.7,1440.5 1474.4,1456.2 1476.1,1438.7 1477.8,1460.6 1479.5,1449.6 1481.2,1463.3 1482.9,1445.3 1484.6,1457.0 1486.3,1466.8 1488.0,1461.4 1489.7,1463.4 1491.4,1459.6 1493.1,1473.0 1494.8,1478.7 1496.5,1469.4 1498.2,1466.8 1499.9,1459.2 1501.6,1476.1 1503.3,1467.6 1505.0,1473.6 1506.7,1466.2 1508.4,1470.9 1510.1,1459.0 1511.8,1456.1 1513.5,1462.4 1515.2,1461.4 1516.9,1450.7 1518.6,1475.0 1520.3,1472.0 1522.0,1474.9 1523.7,1479.3 1525.4,1468.9 1527.1,1473.8 1528.8,1478.1 1530.5,1488.0 1532.2,1484.4 1533.9,1488.0 1535.6,1481.9 1537.3,1483.2 1539.0,1482.4 1540.7,1487.6 1542.4,1477.4 1544.1,1483.9 1545.8,1487.2 1547.5,1492.8 1549.2,1497.0 1550.9,1498.3 1552.6,1496.3 1554.3,1496.2 1556.0,1480.1 1557.7,1467.9 1559.4,1449.5 1561.1,1453.3 1562.8,1434.4 1564.5,1450.9 1566.2,1456.7 1567.9,1462.2 1569.6,1442.4 1571.3,1436.4 1573.0,1441.8 1574.7,1458.8 1576.4,1448.8 1578.1,1462.0 1579.8,1477.4 1581.5,1476.2 1583.2,1481.7 1584.9,1477.3 1586.6,1482.8 1588.3,1473.6 1590.0,1486.2 1591.7,1473.6 1593.4,1473.1 1595.1,1477.0 1596.8,1479.9 1598.5,1469.3 1600.2,1465.3 1601.9,1483.1 1603.6,1482.5 1605.3,1483.0 1607.0,1478.6 1608.7,1477.9 1610.4,1478.7 1612.1,1484.0 1613.8,1474.8 1615.5,1483.5 1617.2,1480.2 1618.9,1483.7 1620.6,1488.5 1622.3,1471.4 1624.0,1459.0 1625.7,1466.8 1627.4,1444.8 1629.1,1450.1 1630.8,1432.5 1632.5,1428.0 1634.2,1443.1 1635.9,1452.1 1637.6,1464.8 1639.3,1477.3 1641.0,1454.6 1642.7,1456.6 1644.4,1458.7 1646.1,1447.2 1647.8,1468.8 1649.5,1459.9 1651.2,1463.7 1652.9,1456.5 1654.6,1454.1 1656.3,1462.8 1658.0,1465.7 1659.7,1457.2 1661.4,1452.3 1663.1,1453.0 1664.8,1456.2 1666.5,1473.7 1668.2,1470.6 1669.9,1459.9 1671.6,1451.7 1673.3,1461.4 1675.0,1444.1 1676.7,1458.5 1678.4,1444.7 1680.1,1461.6 1681.8,1469.2 1683.5,1474.1 1685.2,1465.3 1686.9,1472.8 1688.6,1467.4 1690.3,1462.4 1692.0,1462.2 1693.7,1445.7 1695.4,1457.7 1697.1,1456.8 1698.8,1436.8 1700.5,1460.7 1702.2,1479.2 1703.9,1473.0 1705.6,1468.4 1707.3,1473.5 1709.0,1462.0 1710.7,1471.4 1712.4,1478.4 1714.1,1480.3 1715.8,1480.4 1717.5,1475.7 1719.2,1476.4 1720.9,1472.0 1722.6,1476.1 1724.3,1467.9 1726.0,1464.4 1727.7,1464.8 1729.4,1467.3 1731.1,1471.8 1732.8,1486.9 1734.5,1494.0 1736.2,1487.2 1737.9,1491.9 1739.6,1490.6 1741.3,1483.5 1743.0,1482.4 1744.7,1484.1 1746.4,1486.9 1748.1,1474.6 1749.8,1466.9 1751.5,1471.8 1753.2,1469.1 1754.9,1477.2 1756.6,1488.9 1758.3,1490.3 1760.0,1487.5 1761.7,1489.1 1763.4,1478.7 1765.1,1477.6 1766.8,1490.4 1768.5,1488.3 1770.2,1488.4 1771.9,1482.4 1773.6,1477.2 1775.3,1472.4 1777.0,1485.0 1778.7,1483.0 1780.4,1493.4 1782.1,1486.3 1783.8,1474.2 1785.5,1476.2 1787.2,1477.7 1788.9,1478.5 1790.6,1473.6 1792.3,1483.3 1794.0,1476.1 1795.7,1474.6 1797.4,1473.9 1799.1,1484.8 1800.8,1492.4 1802.5,1499.5 1804.2,1497.5 1805.9,1496.1 1807.6,1495.3 1809.3,1493.4 1811.0,1492.4 1813.6,1493.1 1816.2,1491.8 1818.8,1492.0 1821.4,1496.0 1824.0,1498.1 1826.6,1496.3 1829.2,1492.0 1831.8,1492.9 1834.4,1492.9 1837.0,1495.0 1839.6,1496.4 1842.2,1496.2 1844.8,1497.4 1847.4,1496.6 1850.0,1494.6 1852.6,1495.2 1855.2,1495.0 1857.8,1494.8 1860.4,1494.2 1863.0,1495.3 1865.6,1496.0 1868.2,1497.2 1870.8,1496.8 1873.4,1496.1 1876.0,1497.9 1878.6,1496.8 1881.2,1496.6 1883.8,1497.5 1886.4,1497.7 1889.0,1495.1 1891.6,1494.7 1894.2,1496.1 1896.8,1497.0 1899.4,1499.4 1902.0,1498.8 1904.6,1499.7 1907.2,1498.0 1909.8,1498.7 1912.4,1497.4 1915.0,1496.5 1917.6,1498.3 1920.2,1498.5 1922.8,1498.0 1925.4,1496.9 1928.0,1498.7 1930.6,1499.1 1933.2,1497.0 1935.8,1498.8 1938.4,1499.0 1941.0,1501.0 1943.6,1501.4 1946.2,1500.9 1948.8,1500.4 1951.4,1499.2 1954.0,1499.0 1956.6,1498.4 1959.2,1498.5 1961.8,1498.3 1964.4,1499.6 1967.0,1500.5 1969.6,1499.4 1972.2,1500.5 1974.8,1502.0 1977.4,1501.7 1980.0,1502.2 1982.6,1500.7 1985.2,1500.1 1987.8,1500.7 1990.4,1499.7 1993.0,1500.6 1995.6,1501.4 1998.2,1500.2 2000.8,1501.3 2003.4,1501.1 2006.0,1502.4 2008.6,1501.4 2011.2,1502.1 2013.8,1502.1 2016.4,1502.7 2019.0,1502.7 2021.6,1503.7 2024.2,1503.8 2026.8,1503.4 2029.4,1503.3 2032.0,1503.9 2034.6,1503.1 2037.2,1502.8 2039.8,1503.4 2042.4,1503.4 2045.0,1502.9 2047.6,1502.9 2050.2,1503.8 2052.8,1503.8 2055.4,1504.0 2058.0,1503.6 2060.6,1503.5 2063.2,1503.8 2065.8,1503.8 2068.4,1503.5 2071.0,1504.0 2073.6,1503.9 2076.2,1504.4 2078.8,1504.2 2081.4,1503.5 2084.0,1504.6 2086.6,1504.8 2089.2,1504.6 2091.8,1504.9 2094.4,1504.4 2097.0,1504.1 2099.6,1505.1 2102.2,1505.0 2104.8,1504.7 2107.4,1504.3 2110.0,1504.8 2112.6,1504.7 2115.2,1505.4 2117.8,1505.1 2120.4,1505.1 2123.0,1504.9 2125.6,1505.3 2128.2,1505.5 2130.8,1505.6 2133.4,1505.6 2136.0,1505.8 2138.6,1505.5 2141.2,1505.7 2143.8,1505.8 2146.4,1505.8 2149.0,1506.0 2151.6,1505.7 2154.2,1506.0 2156.8,1506.1 2159.4,1505.5 2162.0,1506.0 2164.6,1505.9 2167.2,1506.2 2169.8,1505.5 2172.4,1506.0 2175.0,1505.6 2177.6,1505.6 2180.2,1506.1 2182.8,1505.7 2185.4,1505.7 2188.0,1505.9 2190.6,1505.7 2193.2,1505.8 2195.8,1505.6 2198.4,1505.6 2201.0,1506.2 2203.6,1505.9 2206.2,1506.1 2208.8,1505.7 2211.4,1506.2 2214.0,1506.0 2216.6,1506.0 2219.2,1506.1 2221.8,1506.0 2224.4,1505.6 2227.0,1505.9 2229.6,1505.8 2232.2,1506.2 2234.8,1505.9 2237.4,1506.2 2240.0,1506.1 2242.6,1506.3 2245.2,1505.8 2247.8,1506.4 2250.4,1506.2 2253.0,1506.3 2255.6,1505.8 2258.2,1506.2 2260.8,1506.1 2263.4,1506.1 2266.0,1505.8 2268.6,1506.1 2271.2,1505.9 2273.8,1506.0 2276.4,1506.2 2279.0,1506.4 2281.6,1506.2 2284.2,1505.8 2286.8,1506.2 2289.4,1506.4 2292.0,1506.3 2294.6,1505.8 2297.2,1506.2 2299.8,1506.3 2302.4,1506.2 2305.0,1506.3 2307.6,1506.0 2310.2,1506.3 2312.8,1506.3 2315.4,1506.3 2318.0,1506.1 2320.6,1506.2 2323.2,1506.0 2325.8,1506.4 2328.4,1505.9 2331.0,1506.4 2333.6,1506.2 2336.2,1506.1 2338.8,1506.1 2341.4,1506.1 2344.0,1506.6 2346.6,1506.4 2349.2,1506.5 2351.8,1506.4 2354.4,1506.1 2357.0,1506.3 2359.6,1506.6 2362.2,1506.4 2364.8,1506.0 2367.4,1506.5 2370.0,1506.4 2372.6,1506.2 2375.2,1506.5 2377.8,1506.0 2380.4,1506.5 2383.0,1506.5 2385.6,1506.7 2388.2,1506.3 2390.8,1506.3 2393.4,1506.5 2396.0,1506.2 2398.6,1506.6 2401.2,1506.5 2403.8,1506.6 2406.4,1506.4 2409.0,1506.7 2411.6,1506.2 2414.2,1506.2 2416.8,1506.2 2419.4,1506.3 2422.0,1506.2 2424.6,1506.3 2427.2,1506.7 2429.8,1506.6 2432.4,1506.1 2435.0,1506.4 2437.6,1506.7 2440.2,1506.6 2442.8,1506.6 2445.4,1506.6 2448.0,1506.6 2450.6,1506.2 2453.2,1506.3 2455.8,1506.2 2458.4,1506.6 2461.0,1506.4 2463.6,1506.6 2466.2,1506.3 2468.8,1506.5 2471.4,1506.5 2474.0,1506.8 2476.6,1506.7 2479.2,1506.6 2481.8,1506.8 2484.4,1506.6 2487.0,1506.9 2489.6,1506.6 2492.2,1506.6 2494.8,1506.3 2497.4,1506.5 2500.0,1506.5 2502.6,1506.5 2505.2,1506.7 2507.8,1506.9 2510.4,1506.5 2513.0,1506.9 2515.6,1506.9 2518.2,1506.6 2520.8,1506.7 2523.4,1506.7 2526.0,1506.5 2528.6,1506.4 2531.2,1506.4 2533.8,1506.6 2536.4,1506.5 2539.0,1506.9 2541.6,1506.6 2544.2,1506.6 2546.8,1506.6 2549.4,1506.4 2552.0,1506.6 2554.6,1506.8 2557.2,1506.7 2559.8,1506.5 2562.4,1506.4 2565.0,1506.9 2567.6,1506.5 2570.2,1507.0 2572.8,1506.9 2575.4,1506.7 2578.0,1506.8 2580.6,1506.6 2583.2,1506.8 2585.8,1507.0 2588.4,1506.6 2591.0,1506.8 2593.6,1506.7 2596.2,1507.0 2598.8,1507.0 2601.4,1506.9 2604.0,1506.7 2606.6,1507.0 2609.2,1506.9 2611.8,1506.9 2614.4,1507.0 2617.0,1506.8 2619.6,1506.7 2622.2,1506.9 2624.8,1507.0 2627.4,1506.9 2630.0,1506.9 2632.6,1506.8 2635.2,1507.1 2637.8,1506.8 2640.4,1507.2 2643.0,1506.9 2645.6,1506.7 2648.2,1506.7 2650.8,1507.2 2653.4,1507.1 2656.0,1507.1 2658.6,1507.1 2661.2,1507.1 2663.8,1507.2 2666.4,1506.7 2669.0,1507.0 2671.6,1507.1 2674.2,1507.2 2676.8,1506.8 2679.4,1507.1 2682.0,1506.8 2684.6,1506.8 2687.2,1506.8 2689.8,1507.2 2692.4,1507.2 2695.0,1507.1 2697.6,1507.3 2700.2,1507.2 2702.8,1507.0 2705.4,1507.1 2708.0,1506.9 2710.6,1507.1 2713.2,1507.3 2715.8,1507.1 2718.4,1507.1 2721.0,1507.0 2723.6,1506.9 2726.2,1507.2 2728.8,1507.1 2731.4,1507.1 2734.0,1507.2 2736.6,1506.9 2739.2,1507.3 2741.8,1507.2 2744.4,1507.4 2747.0,1507.1 2749.6,1506.9 2752.2,1507.0 2754.8,1507.0 2757.4,1507.1 2760.0,1507.4 2762.6,1507.4 2765.2,1507.4 2767.8,1507.2 2770.4,1507.2 2773.0,1507.2 2775.6,1507.1 2778.2,1507.3 2780.8,1507.4 2783.4,1507.4 2786.0,1507.3 2788.6,1507.2 2791.2,1507.2 2793.8,1507.2 2796.4,1507.3 2799.0,1507.2 2801.6,1507.3 2804.2,1507.4 2806.8,1507.3 2809.4,1507.1 2812.0,1507.2 2814.6,1507.3 2817.2,1507.1 2819.8,1507.1 2822.4,1507.2 2825.0,1507.3 2827.6,1507.5 2830.2,1507.4 2832.8,1507.2 2832.8,1510.6 2830.2,1510.5 2827.6,1510.5 2825.0,1510.4 2822.4,1510.4 2819.8,1510.6 2817.2,1510.7 2814.6,1510.4 2812.0,1510.4 2809.4,1510.6 2806.8,1510.5 2804.2,1510.6 2801.6,1510.4 2799.0,1510.7 2796.4,1510.6 2793.8,1510.4 2791.2,1510.4 2788.6,1510.5 2786.0,1510.6 2783.4,1510.5 2780.8,1510.6 2778.2,1510.7 2775.6,1510.7 2773.0,1510.4 2770.4,1510.7 2767.8,1510.7 2765.2,1510.4 2762.6,1510.7 2760.0,1510.5 2757.4,1510.5 2754.8,1510.4 2752.2,1510.6 2749.6,1510.7 2747.0,1510.8 2744.4,1510.7 2741.8,1510.8 2739.2,1510.8 2736.6,1510.6 2734.0,1510.5 2731.4,1510.7 2728.8,1510.7 2726.2,1510.7 2723.6,1510.4 2721.0,1510.6 2718.4,1510.6 2715.8,1510.6 2713.2,1510.8 2710.6,1510.6 2708.0,1510.6 2705.4,1510.9 2702.8,1510.9 2700.2,1510.9 2697.6,1510.7 2695.0,1510.9 2692.4,1510.7 2689.8,1510.8 2687.2,1510.9 2684.6,1510.7 2682.0,1510.5 2679.4,1510.7 2676.8,1510.6 2674.2,1510.5 2671.6,1510.7 2669.0,1510.8 2666.4,1510.9 2663.8,1510.7 2661.2,1510.9 2658.6,1510.8 2656.0,1510.7 2653.4,1511.0 2650.8,1510.8 2648.2,1510.8 2645.6,1511.0 2643.0,1510.7 2640.4,1510.9 2637.8,1510.7 2635.2,1510.7 2632.6,1510.8 2630.0,1510.7 2627.4,1510.6 2624.8,1510.9 2622.2,1510.7 2619.6,1510.9 2617.0,1510.8 2614.4,1511.0 2611.8,1510.9 2609.2,1510.8 2606.6,1510.9 2604.0,1510.8 2601.4,1510.7 2598.8,1510.7 2596.2,1510.7 2593.6,1510.8 2591.0,1510.6 2588.4,1511.0 2585.8,1511.1 2583.2,1511.1 2580.6,1511.1 2578.0,1510.7 2575.4,1511.1 2572.8,1511.0 2570.2,1510.9 2567.6,1510.8 2565.0,1511.1 2562.4,1510.7 2559.8,1511.1 2557.2,1510.8 2554.6,1511.1 2552.0,1510.8 2549.4,1510.8 2546.8,1510.9 2544.2,1511.0 2541.6,1510.9 2539.0,1511.1 2536.4,1511.0 2533.8,1510.8 2531.2,1510.8 2528.6,1510.9 2526.0,1510.8 2523.4,1511.2 2520.8,1511.1 2518.2,1511.2 2515.6,1511.0 2513.0,1510.8 2510.4,1511.0 2507.8,1510.9 2505.2,1510.9 2502.6,1511.2 2500.0,1510.9 2497.4,1510.9 2494.8,1510.8 2492.2,1511.2 2489.6,1511.2 2487.0,1510.9 2484.4,1511.2 2481.8,1510.9 2479.2,1511.2 2476.6,1511.3 2474.0,1511.1 2471.4,1511.0 2468.8,1511.3 2466.2,1511.0 2463.6,1511.0 2461.0,1511.0 2458.4,1510.8 2455.8,1511.0 2453.2,1510.9 2450.6,1511.0 2448.0,1511.1 2445.4,1511.0 2442.8,1510.9 2440.2,1511.3 2437.6,1511.2 2435.0,1511.1 2432.4,1510.9 2429.8,1510.9 2427.2,1511.1 2424.6,1511.2 2422.0,1511.3 2419.4,1511.1 2416.8,1511.1 2414.2,1510.9 2411.6,1511.2 2409.0,1511.3 2406.4,1511.0 2403.8,1511.0 2401.2,1511.1 2398.6,1511.3 2396.0,1511.3 2393.4,1511.4 2390.8,1511.4 2388.2,1511.3 2385.6,1511.2 2383.0,1511.1 2380.4,1511.1 2377.8,1511.0 2375.2,1511.4 2372.6,1511.3 2370.0,1511.3 2367.4,1511.2 2364.8,1511.3 2362.2,1511.1 2359.6,1511.3 2357.0,1511.2 2354.4,1511.3 2351.8,1511.2 2349.2,1511.4 2346.6,1511.1 2344.0,1511.2 2341.4,1511.1 2338.8,1511.6 2336.2,1511.5 2333.6,1511.5 2331.0,1511.0 2328.4,1511.2 2325.8,1511.4 2323.2,1511.4 2320.6,1511.1 2318.0,1511.1 2315.4,1511.2 2312.8,1511.5 2310.2,1511.3 2307.6,1511.5 2305.0,1511.1 2302.4,1511.6 2299.8,1511.1 2297.2,1511.1 2294.6,1511.5 2292.0,1511.4 2289.4,1511.4 2286.8,1511.6 2284.2,1511.4 2281.6,1511.5 2279.0,1511.3 2276.4,1511.3 2273.8,1511.2 2271.2,1511.6 2268.6,1511.2 2266.0,1511.2 2263.4,1511.6 2260.8,1511.6 2258.2,1511.3 2255.6,1511.6 2253.0,1511.3 2250.4,1511.5 2247.8,1511.3 2245.2,1511.3 2242.6,1511.7 2240.0,1511.4 2237.4,1511.2 2234.8,1511.6 2232.2,1511.5 2229.6,1511.7 2227.0,1511.3 2224.4,1511.3 2221.8,1511.7 2219.2,1511.6 2216.6,1511.3 2214.0,1511.7 2211.4,1511.8 2208.8,1511.4 2206.2,1511.7 2203.6,1511.2 2201.0,1511.8 2198.4,1511.6 2195.8,1511.6 2193.2,1511.7 2190.6,1511.3 2188.0,1511.3 2185.4,1511.3 2182.8,1511.4 2180.2,1511.8 2177.6,1511.9 2175.0,1511.5 2172.4,1511.9 2169.8,1511.9 2167.2,1511.9 2164.6,1511.5 2162.0,1511.3 2159.4,1511.3 2156.8,1511.8 2154.2,1511.8 2151.6,1511.9 2149.0,1511.3 2146.4,1511.4 2143.8,1511.6 2141.2,1511.3 2138.6,1511.7 2136.0,1511.3 2133.4,1511.7 2130.8,1511.7 2128.2,1512.1 2125.6,1512.0 2123.0,1511.9 2120.4,1511.6 2117.8,1511.8 2115.2,1511.9 2112.6,1511.7 2110.0,1512.3 2107.4,1512.5 2104.8,1511.8 2102.2,1512.3 2099.6,1512.6 2097.0,1512.7 2094.4,1512.4 2091.8,1512.8 2089.2,1512.8 2086.6,1512.3 2084.0,1513.0 2081.4,1512.6 2078.8,1512.6 2076.2,1512.9 2073.6,1513.0 2071.0,1512.9 2068.4,1512.9 2065.8,1513.1 2063.2,1512.8 2060.6,1513.1 2058.0,1512.6 2055.4,1512.8 2052.8,1513.0 2050.2,1512.7 2047.6,1513.0 2045.0,1513.1 2042.4,1513.5 2039.8,1513.4 2037.2,1513.1 2034.6,1513.4 2032.0,1513.4 2029.4,1514.1 2026.8,1513.9 2024.2,1513.5 2021.6,1514.1 2019.0,1513.4 2016.4,1513.7 2013.8,1514.1 2011.2,1513.6 2008.6,1514.7 2006.0,1514.8 2003.4,1515.3 2000.8,1514.3 1998.2,1515.0 1995.6,1514.9 1993.0,1515.9 1990.4,1515.1 1987.8,1514.9 1985.2,1515.2 1982.6,1515.5 1980.0,1516.1 1977.4,1515.3 1974.8,1515.3 1972.2,1516.6 1969.6,1515.4 1967.0,1515.8 1964.4,1516.4 1961.8,1517.9 1959.2,1517.2 1956.6,1518.1 1954.0,1518.9 1951.4,1518.3 1948.8,1518.9 1946.2,1518.6 1943.6,1519.9 1941.0,1520.1 1938.4,1520.8 1935.8,1520.7 1933.2,1520.5 1930.6,1520.2 1928.0,1520.4 1925.4,1519.3 1922.8,1518.4 1920.2,1517.8 1917.6,1517.4 1915.0,1517.0 1912.4,1518.0 1909.8,1519.3 1907.2,1520.2 1904.6,1521.1 1902.0,1520.9 1899.4,1521.1 1896.8,1523.0 1894.2,1524.6 1891.6,1524.8 1889.0,1525.1 1886.4,1524.4 1883.8,1524.3 1881.2,1524.3 1878.6,1521.3 1876.0,1522.2 1873.4,1527.2 1870.8,1527.2 1868.2,1528.6 1865.6,1526.3 1863.0,1522.3 1860.4,1521.8 1857.8,1520.5 1855.2,1519.7 1852.6,1520.3 1850.0,1521.4 1847.4,1522.1 1844.8,1521.0 1842.2,1522.8 1839.6,1523.0 1837.0,1521.9 1834.4,1527.7 1831.8,1528.6 1829.2,1529.4 1826.6,1525.6 1824.0,1526.8 1821.4,1526.0 1818.8,1531.5 1816.2,1534.4 1813.6,1526.9 1811.0,1525.8 1809.3,1523.5 1807.6,1523.2 1805.9,1525.4 1804.2,1529.2 1802.5,1530.9 1800.8,1528.0 1799.1,1531.1 1797.4,1531.8 1795.7,1527.1 1794.0,1530.2 1792.3,1529.2 1790.6,1526.2 1788.9,1522.2 1787.2,1520.1 1785.5,1525.5 1783.8,1527.8 1782.1,1523.4 1780.4,1526.7 1778.7,1530.7 1777.0,1530.1 1775.3,1532.9 1773.6,1523.8 1771.9,1527.4 1770.2,1528.7 1768.5,1532.7 1766.8,1535.8 1765.1,1527.5 1763.4,1538.6 1761.7,1530.0 1760.0,1529.6 1758.3,1534.2 1756.6,1528.6 1754.9,1529.2 1753.2,1537.1 1751.5,1540.1 1749.8,1533.6 1748.1,1548.3 1746.4,1539.3 1744.7,1546.5 1743.0,1535.7 1741.3,1538.5 1739.6,1532.2 1737.9,1539.3 1736.2,1530.3 1734.5,1539.3 1732.8,1536.6 1731.1,1529.2 1729.4,1533.7 1727.7,1527.1 1726.0,1532.1 1724.3,1542.7 1722.6,1556.4 1720.9,1551.1 1719.2,1546.4 1717.5,1535.9 1715.8,1530.7 1714.1,1550.6 1712.4,1572.8 1710.7,1561.1 1709.0,1546.5 1707.3,1537.5 1705.6,1532.5 1703.9,1537.2 1702.2,1549.1 1700.5,1547.0 1698.8,1556.0 1697.1,1541.4 1695.4,1536.2 1693.7,1535.1 1692.0,1531.9 1690.3,1532.0 1688.6,1543.1 1686.9,1554.2 1685.2,1547.6 1683.5,1536.9 1681.8,1542.9 1680.1,1536.1 1678.4,1544.6 1676.7,1554.5 1675.0,1559.8 1673.3,1552.1 1671.6,1553.8 1669.9,1550.8 1668.2,1552.4 1666.5,1548.2 1664.8,1545.6 1663.1,1561.5 1661.4,1574.1 1659.7,1573.5 1658.0,1553.1 1656.3,1563.8 1654.6,1545.3 1652.9,1542.5 1651.2,1545.8 1649.5,1568.6 1647.8,1565.3 1646.1,1562.7 1644.4,1573.0 1642.7,1564.9 1641.0,1563.8 1639.3,1566.7 1637.6,1571.1 1635.9,1582.9 1634.2,1562.8 1632.5,1566.3 1630.8,1570.6 1629.1,1560.1 1627.4,1570.6 1625.7,1562.1 1624.0,1572.5 1622.3,1547.5 1620.6,1552.6 1618.9,1541.3 1617.2,1539.2 1615.5,1537.8 1613.8,1536.3 1612.1,1542.1 1610.4,1537.5 1608.7,1534.6 1607.0,1540.8 1605.3,1532.9 1603.6,1526.9 1601.9,1523.5 1600.2,1532.5 1598.5,1536.2 1596.8,1541.1 1595.1,1550.1 1593.4,1543.2 1591.7,1532.4 1590.0,1530.0 1588.3,1532.6 1586.6,1533.7 1584.9,1533.2 1583.2,1538.6 1581.5,1542.5 1579.8,1546.1 1578.1,1562.3 1576.4,1556.7 1574.7,1554.3 1573.0,1556.3 1571.3,1564.2 1569.6,1580.1 1567.9,1561.3 1566.2,1561.9 1564.5,1572.6 1562.8,1571.7 1561.1,1562.0 1559.4,1569.1 1557.7,1541.0 1556.0,1546.3 1554.3,1529.1 1552.6,1519.1 1550.9,1522.2 1549.2,1524.1 1547.5,1525.7 1545.8,1524.8 1544.1,1524.2 1542.4,1528.9 1540.7,1527.7 1539.0,1528.2 1537.3,1526.9 1535.6,1529.4 1533.9,1533.0 1532.2,1535.9 1530.5,1535.8 1528.8,1540.6 1527.1,1539.9 1525.4,1541.5 1523.7,1534.6 1522.0,1537.3 1520.3,1531.9 1518.6,1534.1 1516.9,1543.3 1515.2,1547.9 1513.5,1537.6 1511.8,1546.0 1510.1,1545.1 1508.4,1546.6 1506.7,1540.6 1505.0,1551.4 1503.3,1549.6 1501.6,1553.3 1499.9,1550.2 1498.2,1550.3 1496.5,1561.0 1494.8,1546.9 1493.1,1559.7 1491.4,1552.2 1489.7,1567.1 1488.0,1565.7 1486.3,1571.6 1484.6,1550.1 1482.9,1562.0 1481.2,1572.3 1479.5,1576.9 1477.8,1559.9 1476.1,1579.1 1474.4,1558.1 1472.7,1576.2 1471.0,1563.8 1469.3,1565.2 1467.6,1573.9 1465.9,1578.0 1464.2,1561.2 1462.5,1567.0 1460.8,1562.7 1459.1,1560.2 1457.4,1528.8 1455.7,1524.3 1454.0,1528.6 1452.3,1528.3 1450.6,1524.3 1448.9,1524.2 1447.2,1524.3 1445.5,1523.2 1443.8,1520.0 1442.1,1517.7 1440.4,1518.2 1438.7,1520.6 1437.0,1525.5 1435.3,1523.9 1433.6,1524.9 1431.9,1530.6 1430.2,1530.5 1428.5,1533.7 1426.8,1532.5 1425.1,1542.0 1423.4,1534.6 1421.7,1533.8 1420.0,1528.7 1418.3,1531.8 1416.6,1541.5 1414.9,1549.8 1413.2,1541.3 1411.5,1546.1 1409.8,1541.0 1408.1,1538.7 1406.4,1529.7 1404.7,1531.7 1403.0,1535.2 1401.3,1538.4 1399.6,1547.8 1397.9,1551.9 1396.2,1535.0 1394.5,1545.5 1392.8,1536.3 1391.1,1543.1 1389.4,1538.7 1387.7,1539.5 1386.0,1537.5 1384.3,1536.2 1382.6,1522.7 1380.9,1509.9 1379.2,1509.9 1377.5,1509.9 1375.8,1509.9 1374.1,1509.9 1372.4,1509.9 1370.7,1509.9 1369.0,1509.9 1367.3,1509.9 1365.6,1509.9 1363.9,1509.9 1362.2,1509.9 1360.5,1509.9 1358.8,1509.9 1357.1,1509.9 1355.4,1509.9 1353.7,1509.9 1352.0,1511.6" fill="#f3b063"/>
<line x1="1352.30" y1="1590.00" x2="1352.30" y2="1613.00" stroke="#6f9aa2" stroke-width="1.6" />
<line x1="1352.30" y1="1590.50" x2="1356.30" y2="1590.50" stroke="#6f9aa2" stroke-width="1.6" />
<text x="1358.8" y="1599.1" font-size="25" fill="#7aa8b0" text-anchor="start" font-weight="normal"  textLength="50.1179" lengthAdjust="spacingAndGlyphs">0:00</text>
<line x1="1430.10" y1="1604.50" x2="1430.10" y2="1613.00" stroke="#6f9aa2" stroke-width="1.6" />
<line x1="1507.90" y1="1604.50" x2="1507.90" y2="1613.00" stroke="#6f9aa2" stroke-width="1.6" />
<line x1="1585.70" y1="1604.50" x2="1585.70" y2="1613.00" stroke="#6f9aa2" stroke-width="1.6" />
<line x1="1663.50" y1="1604.50" x2="1663.50" y2="1613.00" stroke="#6f9aa2" stroke-width="1.6" />
<line x1="1741.30" y1="1590.00" x2="1741.30" y2="1613.00" stroke="#6f9aa2" stroke-width="1.6" />
<line x1="1741.30" y1="1590.50" x2="1745.30" y2="1590.50" stroke="#6f9aa2" stroke-width="1.6" />
<text x="1747.8" y="1599.1" font-size="25" fill="#7aa8b0" text-anchor="start" font-weight="normal"  textLength="100.236" lengthAdjust="spacingAndGlyphs">0:00:050</text>
<line x1="1819.10" y1="1604.50" x2="1819.10" y2="1613.00" stroke="#6f9aa2" stroke-width="1.6" />
<line x1="1896.90" y1="1604.50" x2="1896.90" y2="1613.00" stroke="#6f9aa2" stroke-width="1.6" />
<line x1="1974.70" y1="1604.50" x2="1974.70" y2="1613.00" stroke="#6f9aa2" stroke-width="1.6" />
<line x1="2052.50" y1="1604.50" x2="2052.50" y2="1613.00" stroke="#6f9aa2" stroke-width="1.6" />
<line x1="2130.30" y1="1590.00" x2="2130.30" y2="1613.00" stroke="#6f9aa2" stroke-width="1.6" />
<line x1="2130.30" y1="1590.50" x2="2134.30" y2="1590.50" stroke="#6f9aa2" stroke-width="1.6" />
<text x="2136.8" y="1599.1" font-size="25" fill="#7aa8b0" text-anchor="start" font-weight="normal"  textLength="100.236" lengthAdjust="spacingAndGlyphs">0:00:100</text>
<line x1="2208.10" y1="1604.50" x2="2208.10" y2="1613.00" stroke="#6f9aa2" stroke-width="1.6" />
<line x1="2285.90" y1="1604.50" x2="2285.90" y2="1613.00" stroke="#6f9aa2" stroke-width="1.6" />
<line x1="2363.70" y1="1604.50" x2="2363.70" y2="1613.00" stroke="#6f9aa2" stroke-width="1.6" />
<line x1="2441.50" y1="1604.50" x2="2441.50" y2="1613.00" stroke="#6f9aa2" stroke-width="1.6" />
<line x1="2519.30" y1="1590.00" x2="2519.30" y2="1613.00" stroke="#6f9aa2" stroke-width="1.6" />
<line x1="2519.30" y1="1590.50" x2="2523.30" y2="1590.50" stroke="#6f9aa2" stroke-width="1.6" />
<text x="2525.8" y="1599.1" font-size="25" fill="#7aa8b0" text-anchor="start" font-weight="normal"  textLength="100.236" lengthAdjust="spacingAndGlyphs">0:00:150</text>
<line x1="2597.10" y1="1604.50" x2="2597.10" y2="1613.00" stroke="#6f9aa2" stroke-width="1.6" />
<line x1="2674.90" y1="1604.50" x2="2674.90" y2="1613.00" stroke="#6f9aa2" stroke-width="1.6" />
<line x1="2752.70" y1="1604.50" x2="2752.70" y2="1613.00" stroke="#6f9aa2" stroke-width="1.6" />
<line x1="2830.50" y1="1604.50" x2="2830.50" y2="1613.00" stroke="#6f9aa2" stroke-width="1.6" />
<line x1="2908.30" y1="1590.00" x2="2908.30" y2="1613.00" stroke="#6f9aa2" stroke-width="1.6" />
<line x1="2908.30" y1="1590.50" x2="2912.30" y2="1590.50" stroke="#6f9aa2" stroke-width="1.6" />
<rect x="1350.8" y="1404.5" width="2.8" height="208.5" fill="#8e8e8e" />
<polygon points="1351,1406.5 1373.5,1418 1351,1429.5" fill="#8e8e8e"/>
<rect x="2939.5" y="1404.5" width="2.5" height="208.5" fill="#8e8e8e" />
<polygon points="2942,1406.5 2921,1418 2942,1429.5" fill="#8e8e8e"/>
<line x1="2763.70" y1="1404.50" x2="2763.70" y2="1613.00" stroke="#e07048" stroke-width="2" />
<text x="1354" y="1645.0" font-size="24.5" fill="#8e8e8e" text-anchor="start" font-weight="normal" >Gain</text>
<text x="1359" y="1681.1" font-size="25.5" fill="#4fc0d8" text-anchor="start" font-weight="normal"  textLength="70" lengthAdjust="spacingAndGlyphs">0.0 dB</text>
<rect x="1461.5" y="1625.3" width="103.3" height="62" fill="#161616" stroke="#4fc0d8" stroke-width="2.4" />
<rect x="1461.5" y="1625.3" width="103.3" height="33.5" fill="#58c0d8" />
<text x="1513.2" y="1647.3" font-size="17" fill="#16323a" text-anchor="middle" font-weight="bold" font-stretch="expanded" textLength="88" lengthAdjust="spacingAndGlyphs">TRIGGER</text>
<text x="1513.2" y="1678.8" font-size="17" fill="#4fc0d8" text-anchor="middle" font-weight="bold"  textLength="56" lengthAdjust="spacingAndGlyphs">GATE</text>
<rect x="1591" y="1642.2" width="91.3" height="26.3" fill="#58c0d8" />
<text x="1636.6" y="1661.4" font-size="17" fill="#16323a" text-anchor="middle" font-weight="bold"  textLength="56" lengthAdjust="spacingAndGlyphs">SNAP</text>
<rect x="2625.5" y="1626" width="129.2" height="25.6" fill="none" stroke="#f3b063" stroke-width="2.2" />
<text x="2690" y="1644.5" font-size="16" fill="#f3b063" text-anchor="middle" font-weight="bold"  textLength="56" lengthAdjust="spacingAndGlyphs">WARP</text>
<text x="2773" y="1648.4" font-size="24.5" fill="#8e8e8e" text-anchor="start" font-weight="normal" >as</text>
<rect x="2806" y="1624" width="126" height="29" fill="none" rx="14.5" stroke="#3e3e3e" stroke-width="1.8" />
<text x="2869" y="1647.2" font-size="24.5" fill="#f3b063" text-anchor="middle" font-weight="normal"  textLength="72" lengthAdjust="spacingAndGlyphs">1 Beat</text>
<text x="2631.5" y="1683.4" font-size="24.5" fill="#8e8e8e" text-anchor="start" font-weight="normal"  textLength="64" lengthAdjust="spacingAndGlyphs">Beats</text>
<polygon points="2735.5,1672.5 2748.5,1672.5 2742.0,1679.5" fill="#8e8e8e"/>
<rect x="2806" y="1660" width="58.4" height="29" fill="none" rx="14.5" stroke="#3e3e3e" stroke-width="1.8" />
<text x="2835.2" y="1683.4" font-size="24.5" fill="#8e8e8e" text-anchor="middle" font-weight="normal" >:2</text>
<rect x="2870.8" y="1660" width="61.2" height="29" fill="none" rx="14.5" stroke="#3e3e3e" stroke-width="1.8" />
<text x="2901.4" y="1683.9" font-size="24.5" fill="#8e8e8e" text-anchor="middle" font-weight="normal" >*2</text>
<rect x="1246.3" y="1710.6" width="30" height="28.9" fill="#f3b063" stroke="#1a1a1a" stroke-width="2" />
<text x="1284.6" y="1734.0" font-size="24.5" fill="#c8c8c8" text-anchor="start" font-weight="bold"  textLength="63" lengthAdjust="spacingAndGlyphs">Filter</text>
<rect x="1359" y="1710.6" width="94.6" height="28.9" fill="#1c1c1c" stroke="#111" stroke-width="2" />
<path d="M1366 1718.5H1394Q1401 1718.5 1401 1732" fill="none" stroke="#b5b5b5" stroke-width="2" />
<polygon points="1433.5,1720.0 1447.5,1720.0 1440.5,1731.0" fill="#c8c8c8"/>
<rect x="1246.3" y="1755.7" width="43.9" height="30" fill="#1c1c1c" stroke="#111" stroke-width="2" />
<text x="1268.3" y="1779.4" font-size="24.5" fill="#c8c8c8" text-anchor="middle" font-weight="normal" >12</text>
<rect x="1298.9" y="1755.7" width="44.3" height="30" fill="#f3b063" stroke="#111" stroke-width="2" />
<text x="1321" y="1779.4" font-size="24.5" fill="#0a0a0a" text-anchor="middle" font-weight="normal" >24</text>
<rect x="1359" y="1755.7" width="94.6" height="30" fill="#1c1c1c" stroke="#111" stroke-width="2" />
<text x="1364.5" y="1779.4" font-size="24.5" fill="#c8c8c8" text-anchor="start" font-weight="normal"  textLength="47" lengthAdjust="spacingAndGlyphs">PRD</text>
<polygon points="1433.5,1765.5 1447.5,1765.5 1440.5,1776.5" fill="#c8c8c8"/>
<text x="1474.3" y="1726.4" font-size="24.5" fill="#c8c8c8" text-anchor="start" font-weight="normal"  textLength="122" lengthAdjust="spacingAndGlyphs">Frequency</text>
<path d="M1496.00 1781.70A20.4 20.4 0 1 1 1516.40 1761.30" fill="none" stroke="#161616" stroke-width="4.6" />
<path d="M1496.00 1781.70A20.4 20.4 0 1 1 1513.30 1750.49" fill="none" stroke="#4fc0d8" stroke-width="4.6" />
<line x1="1497.70" y1="1760.24" x2="1514.57" y2="1749.69" stroke="#161616" stroke-width="5" stroke-linecap="round"/>
<text x="1505.4" y="1788.4" font-size="24.5" fill="#c8c8c8" text-anchor="start" font-weight="normal"  textLength="98" lengthAdjust="spacingAndGlyphs">10.6 kHz</text>
<text x="1610.6" y="1726.4" font-size="24.5" fill="#c8c8c8" text-anchor="start" font-weight="normal"  textLength="40" lengthAdjust="spacingAndGlyphs">Res</text>
<path d="M1633.00 1781.70A20.4 20.4 0 1 1 1653.40 1761.30" fill="none" stroke="#161616" stroke-width="4.6" />
<path d="M1633.00 1781.70A20.4 20.4 0 0 1 1614.22 1769.27" fill="none" stroke="#4fc0d8" stroke-width="4.6" />
<line x1="1631.16" y1="1762.08" x2="1612.84" y2="1769.86" stroke="#161616" stroke-width="5" stroke-linecap="round"/>
<text x="1642.5" y="1788.4" font-size="24.5" fill="#c8c8c8" text-anchor="start" font-weight="normal"  textLength="53" lengthAdjust="spacingAndGlyphs">31 %</text>
<text x="1721.4" y="1726.4" font-size="24.5" fill="#c8c8c8" text-anchor="start" font-weight="normal"  textLength="60" lengthAdjust="spacingAndGlyphs">Drive</text>
<path d="M1743.20 1781.70A20.4 20.4 0 1 1 1763.60 1761.30" fill="none" stroke="#161616" stroke-width="4.6" />
<path d="M1743.20 1781.70A20.4 20.4 0 0 1 1724.56 1753.00" fill="none" stroke="#4fc0d8" stroke-width="4.6" />
<line x1="1741.37" y1="1760.49" x2="1723.19" y2="1752.39" stroke="#161616" stroke-width="5" stroke-linecap="round"/>
<text x="1752.6" y="1788.4" font-size="24.5" fill="#c8c8c8" text-anchor="start" font-weight="normal"  textLength="85" lengthAdjust="spacingAndGlyphs">10.1 dB</text>
<line x1="1873.50" y1="1705.00" x2="1873.50" y2="1790.00" stroke="#2a2a2a" stroke-width="2" />
<rect x="1915.6" y="1712.5" width="30" height="30" fill="#1c1c1c" stroke="#111" stroke-width="2" />
<text x="1957" y="1735.9" font-size="24.5" fill="#c8c8c8" text-anchor="start" font-weight="bold"  textLength="43" lengthAdjust="spacingAndGlyphs">LFO</text>
<rect x="1915.6" y="1753.8" width="101.8" height="29.2" fill="#363636" stroke="#1a1a1a" stroke-width="2" />
<polygon points="1998.0,1762.5 2012.0,1762.5 2005.0,1773.5" fill="#c8c8c8"/>
<rect x="2053" y="1713.2" width="56" height="28.6" fill="#6e6e6e" stroke="#1a1a1a" stroke-width="2" />
<text x="2081" y="1736.2" font-size="24.5" fill="#3e3e3e" text-anchor="middle" font-weight="normal" >Hz</text>
<rect x="2118.5" y="1713.2" width="58.3" height="28.6" fill="#1c1c1c" stroke="#111" stroke-width="2" />
<path d="M2137 1736L2143 1722H2150L2156 1736ZM2149 1729L2153 1717" fill="none" stroke="#5a5a5a" stroke-width="1.8" />
<rect x="2053" y="1753.8" width="123.8" height="29.2" fill="#363636" stroke="#1a1a1a" stroke-width="2" />
<line x1="2223.80" y1="1705.00" x2="2223.80" y2="1790.00" stroke="#2a2a2a" stroke-width="2" />
<text x="2244.8" y="1726.4" font-size="24.5" fill="#c8c8c8" text-anchor="start" font-weight="normal"  textLength="83" lengthAdjust="spacingAndGlyphs">Fade In</text>
<path d="M2267.00 1781.70A20.4 20.4 0 1 1 2287.40 1761.30" fill="none" stroke="#161616" stroke-width="4.6" />
<line x1="2267.00" y1="1763.30" x2="2267.00" y2="1783.20" stroke="#161616" stroke-width="5" stroke-linecap="round"/>
<text x="2275.7" y="1788.4" font-size="24.5" fill="#c8c8c8" text-anchor="start" font-weight="normal"  textLength="88" lengthAdjust="spacingAndGlyphs">0.00 ms</text>
<text x="2388.8" y="1726.4" font-size="24.5" fill="#c8c8c8" text-anchor="start" font-weight="normal"  textLength="104" lengthAdjust="spacingAndGlyphs">Fade Out</text>
<path d="M2411.00 1781.70A20.4 20.4 0 1 1 2431.40 1761.30" fill="none" stroke="#161616" stroke-width="4.6" />
<line x1="2410.65" y1="1763.27" x2="2407.20" y2="1782.87" stroke="#161616" stroke-width="5" stroke-linecap="round"/>
<text x="2419.6" y="1788.4" font-size="24.5" fill="#c8c8c8" text-anchor="start" font-weight="normal"  textLength="88" lengthAdjust="spacingAndGlyphs">0.10 ms</text>
<text x="2533.2" y="1726.4" font-size="24.5" fill="#c8c8c8" text-anchor="start" font-weight="normal"  textLength="79" lengthAdjust="spacingAndGlyphs">Transp</text>
<path d="M2562.00 1781.70A20.4 20.4 0 1 1 2582.40 1761.30" fill="none" stroke="#161616" stroke-width="4.6" />
<line x1="2560.59" y1="1759.89" x2="2546.51" y2="1745.81" stroke="#161616" stroke-width="5" stroke-linecap="round"/>
<polygon points="2534.5,1742.0 2545.5,1742.0 2540.0,1732.0" fill="#161616"/>
<text x="2573.4" y="1789.9" font-size="24.5" fill="#c8c8c8" text-anchor="start" font-weight="normal"  textLength="42" lengthAdjust="spacingAndGlyphs">0 st</text>
<text x="2676.8" y="1726.4" font-size="24.5" fill="#c8c8c8" text-anchor="start" font-weight="normal"  textLength="96" lengthAdjust="spacingAndGlyphs">Vol &lt; Vel</text>
<path d="M2699.00 1781.70A20.4 20.4 0 1 1 2719.40 1761.30" fill="none" stroke="#161616" stroke-width="4.6" />
<path d="M2699.00 1781.70A20.4 20.4 0 0 1 2678.80 1758.46" fill="none" stroke="#4fc0d8" stroke-width="4.6" />
<line x1="2697.02" y1="1761.02" x2="2677.31" y2="1758.25" stroke="#161616" stroke-width="5" stroke-linecap="round"/>
<text x="2708" y="1788.4" font-size="24.5" fill="#c8c8c8" text-anchor="start" font-weight="normal"  textLength="53" lengthAdjust="spacingAndGlyphs">37 %</text>
<text x="2821.4" y="1726.4" font-size="24.5" fill="#c8c8c8" text-anchor="start" font-weight="normal"  textLength="84" lengthAdjust="spacingAndGlyphs">Volume</text>
<path d="M2843.00 1781.70A20.4 20.4 0 1 1 2863.40 1761.30" fill="none" stroke="#161616" stroke-width="4.6" />
<path d="M2843.00 1781.70A20.4 20.4 0 0 1 2822.80 1758.46" fill="none" stroke="#4fc0d8" stroke-width="4.6" />
<line x1="2841.02" y1="1761.02" x2="2821.31" y2="1758.25" stroke="#161616" stroke-width="5" stroke-linecap="round"/>
<text x="2852.5" y="1788.4" font-size="24.5" fill="#c8c8c8" text-anchor="start" font-weight="normal"  textLength="94" lengthAdjust="spacingAndGlyphs">-10.9 dB</text>
<rect x="7.2" y="1455.3" width="7.6" height="6.2" fill="#f3b063" rx="2.5" />
<rect x="7.2" y="1467.4" width="7.6" height="6.2" fill="#f3b063" rx="2.5" />
<rect x="7.2" y="1479.5" width="7.6" height="6.2" fill="#f3b063" rx="2.5" />
<rect x="7.2" y="1491.6" width="7.6" height="6.2" fill="#f3b063" rx="2.5" />
<rect x="7.2" y="1503.7" width="7.6" height="6.2" fill="#f3b063" rx="2.5" />
<rect x="7.2" y="1515.8" width="7.6" height="6.2" fill="#f3b063" rx="2.5" />
<rect x="7.2" y="1527.9" width="7.6" height="6.2" fill="#f3b063" rx="2.5" />
<rect x="7.2" y="1540" width="7.6" height="6.2" fill="#f3b063" rx="2.5" />
<rect x="7.2" y="1552.1" width="7.6" height="6.2" fill="#f3b063" rx="2.5" />
<rect x="7.2" y="1564.2" width="7.6" height="6.2" fill="#f3b063" rx="2.5" />
<rect x="7.2" y="1576.3" width="7.6" height="6.2" fill="#f3b063" rx="2.5" />
<rect x="7.2" y="1588.4" width="7.6" height="6.2" fill="#f3b063" rx="2.5" />
<rect x="7.2" y="1600.5" width="7.6" height="6.2" fill="#f3b063" rx="2.5" />
<rect x="7.2" y="1612.6" width="7.6" height="6.2" fill="#f3b063" rx="2.5" />
<rect x="7.2" y="1624.7" width="7.6" height="6.2" fill="#f3b063" rx="2.5" />
<rect x="7.2" y="1636.8" width="7.6" height="6.2" fill="#f3b063" rx="2.5" />
<rect x="7.2" y="1648.9" width="7.6" height="6.2" fill="#f3b063" rx="2.5" />
<rect x="7.2" y="1661" width="7.6" height="6.2" fill="#f3b063" rx="2.5" />
<rect x="7.2" y="1673.1" width="7.6" height="6.2" fill="#f3b063" rx="2.5" />
<rect x="7.2" y="1685.2" width="7.6" height="6.2" fill="#f3b063" rx="2.5" />
<rect x="7.2" y="1697.3" width="7.6" height="6.2" fill="#f3b063" rx="2.5" />
<circle cx="44.2" cy="1842.6" r="18.2" fill="#444" />
<text x="44.4" y="1852.5" font-size="29.5" fill="#282828" text-anchor="middle" font-weight="bold" >i</text>
<rect x="100.9" y="1819.7" width="1686.8" height="45.7" fill="#363636" rx="8" />
<rect x="1810.3" y="1819.7" width="527.4" height="45.7" fill="#363636" rx="8" />
<polygon points="1825.8,1833.7 1825.8,1851.7 1841.8,1842.7" fill="#b4b4b4"/>
<line x1="1856.50" y1="1819.70" x2="1856.50" y2="1865.40" stroke="#1e1e1e" stroke-width="2.6" />
<rect x="2380" y="1819.9" width="220" height="44.8" fill="#363636" />
<rect x="2358.9" y="1819.9" width="45.7" height="44.8" fill="#f3b063" rx="5" />
<rect x="2390" y="1819.9" width="14.6" height="44.8" fill="#f3b063" />
<polygon points="2373.5,1849.7 2390.5,1849.7 2382.0,1834.7" fill="#0a0a0a"/>
<text x="2422.5" y="1852.3" font-size="27.5" fill="#d2d2d2" text-anchor="start" font-weight="bold"  textLength="137" lengthAdjust="spacingAndGlyphs">2-Castle Kit</text>
<clipPath id="cth"><rect x="2578" y="1819" width="310" height="47" rx="5"/></clipPath><g clip-path="url(#cth)">
<rect x="2578" y="1819" width="310" height="47" fill="#5f7883" />
<rect x="2582" y="1822.5" width="49.7" height="42" fill="#3a3a3a" />
<rect x="2584" y="1824" width="10.5" height="6" fill="#4a4a4a" />
<circle cx="2589.2" cy="1836.5" r="3.3" fill="none" stroke="#151515" stroke-width="1.4" />
<rect x="2595.8" y="1824" width="10.5" height="6" fill="#4a4a4a" />
<circle cx="2601" cy="1836.5" r="3.3" fill="none" stroke="#151515" stroke-width="1.4" />
<rect x="2607.6" y="1824" width="10.5" height="6" fill="#4a4a4a" />
<circle cx="2612.8" cy="1836.5" r="3.3" fill="none" stroke="#151515" stroke-width="1.4" />
<rect x="2619.4" y="1824" width="10.5" height="6" fill="#4a4a4a" />
<circle cx="2624.6" cy="1836.5" r="3.3" fill="none" stroke="#151515" stroke-width="1.4" />
<rect x="2584" y="1844.5" width="10.5" height="6" fill="#4a4a4a" />
<circle cx="2589.2" cy="1857" r="3.3" fill="none" stroke="#2f8ea4" stroke-width="1.4" />
<rect x="2595.8" y="1844.5" width="10.5" height="6" fill="#4a4a4a" />
<circle cx="2601" cy="1857" r="3.3" fill="none" stroke="#2f8ea4" stroke-width="1.4" />
<rect x="2607.6" y="1844.5" width="10.5" height="6" fill="#808080" />
<circle cx="2612.8" cy="1857" r="3.3" fill="none" stroke="#2f8ea4" stroke-width="1.4" />
<rect x="2619.4" y="1844.5" width="10.5" height="6" fill="#808080" />
<circle cx="2624.6" cy="1857" r="3.3" fill="none" stroke="#2f8ea4" stroke-width="1.4" />
<rect x="2633" y="1822.5" width="64.4" height="42" fill="#3a3a3a" />
<rect x="2643" y="1824" width="12.2" height="5.6" fill="#bdbdbd" />
<rect x="2643" y="1829.8" width="12.2" height="3" fill="#2e2e2e" />
<rect x="2656.4" y="1824" width="12.2" height="5.6" fill="#bdbdbd" />
<rect x="2656.4" y="1829.8" width="12.2" height="3" fill="#2e2e2e" />
<rect x="2669.8" y="1824" width="12.2" height="5.6" fill="#bdbdbd" />
<rect x="2669.8" y="1829.8" width="12.2" height="3" fill="#2e2e2e" />
<rect x="2683.2" y="1824" width="12.2" height="5.6" fill="#bdbdbd" />
<rect x="2683.2" y="1829.8" width="12.2" height="3" fill="#2e2e2e" />
<rect x="2643" y="1834.2" width="12.2" height="5.6" fill="#bdbdbd" />
<rect x="2643" y="1840" width="12.2" height="3" fill="#2e2e2e" />
<rect x="2656.4" y="1834.2" width="12.2" height="5.6" fill="#bdbdbd" />
<rect x="2656.4" y="1840" width="12.2" height="3" fill="#2e2e2e" />
<rect x="2669.8" y="1834.2" width="12.2" height="5.6" fill="#bdbdbd" />
<rect x="2669.8" y="1840" width="12.2" height="3" fill="#2e2e2e" />
<rect x="2683.2" y="1834.2" width="12.2" height="5.6" fill="#bdbdbd" />
<rect x="2683.2" y="1840" width="12.2" height="3" fill="#2e2e2e" />
<rect x="2643" y="1844.4" width="12.2" height="5.6" fill="#bdbdbd" />
<rect x="2643" y="1850.2" width="12.2" height="3" fill="#2e2e2e" />
<rect x="2656.4" y="1844.4" width="12.2" height="5.6" fill="#bdbdbd" />
<rect x="2656.4" y="1850.2" width="12.2" height="3" fill="#2e2e2e" />
<rect x="2669.8" y="1844.4" width="12.2" height="5.6" fill="#bdbdbd" />
<rect x="2669.8" y="1850.2" width="12.2" height="3" fill="#2e2e2e" />
<rect x="2683.2" y="1844.4" width="12.2" height="5.6" fill="#bdbdbd" />
<rect x="2683.2" y="1850.2" width="12.2" height="3" fill="#2e2e2e" />
<rect x="2643" y="1854.6" width="12.2" height="5.6" fill="#bdbdbd" />
<rect x="2643" y="1860.4" width="12.2" height="3" fill="#2e2e2e" />
<rect x="2656.4" y="1854.6" width="12.2" height="5.6" fill="#bdbdbd" />
<rect x="2656.4" y="1860.4" width="12.2" height="3" fill="#2e2e2e" />
<rect x="2669.8" y="1854.6" width="12.2" height="5.6" fill="#bdbdbd" />
<rect x="2669.8" y="1860.4" width="12.2" height="3" fill="#2e2e2e" />
<rect x="2683.2" y="1854.6" width="12.2" height="5.6" fill="#bdbdbd" />
<rect x="2683.2" y="1860.4" width="12.2" height="3" fill="#2e2e2e" />
<rect x="2634.5" y="1826" width="4" height="4" fill="#6e6e6e" rx="2" />
<rect x="2634.5" y="1835.5" width="4" height="4" fill="#6e6e6e" rx="2" />
<rect x="2634.5" y="1845" width="4" height="4" fill="#f3b063" rx="2" />
<rect x="2634.5" y="1854.5" width="4" height="4" fill="#6e6e6e" rx="2" />
<rect x="2699" y="1822.5" width="178" height="42" fill="#363636" />
<rect x="2700.5" y="1824" width="9" height="30" fill="#161616" />
<rect x="2710.9" y="1825" width="161.1" height="21.8" fill="#2d5f6a" />
<rect x="2858" y="1825" width="14" height="21.8" fill="#244a52" />
<path d="M2712 1836L2716 1831.5L2720 1832.5L2723 1828.5L2727 1831L2731 1828.5L2735 1830.5L2739 1828.7L2743 1831.5L2747 1832L2752 1834L2760 1835L2780 1835.6L2858 1836L2780 1836.6L2760 1837.2L2752 1838.5L2747 1840L2743 1841L2739 1843.5L2735 1841L2731 1843.7L2727 1841L2723 1843.6L2720 1840L2716 1840.5Z" fill="#f3b063" />
<line x1="2846.00" y1="1825.00" x2="2846.00" y2="1846.80" stroke="#e07048" stroke-width="0.8" />
<rect x="2710.9" y="1846.8" width="166" height="7.2" fill="#161616" />
<rect x="2722" y="1848.3" width="11" height="4" fill="#4fc0d8" />
<rect x="2736" y="1848.8" width="9" height="3.2" fill="#4fc0d8" />
<rect x="2840" y="1848.2" width="9" height="3" fill="#f3b063" />
<rect x="2701" y="1856" width="6" height="5" fill="#f3b063" />
<circle cx="2716" cy="1860" r="2" fill="none" stroke="#2f7f92" stroke-width="0.9" />
<circle cx="2740" cy="1860" r="2" fill="none" stroke="#2f7f92" stroke-width="0.9" />
<circle cx="2790" cy="1860" r="2" fill="none" stroke="#2f7f92" stroke-width="0.9" />
<circle cx="2815" cy="1860" r="2" fill="none" stroke="#2f7f92" stroke-width="0.9" />
<circle cx="2838" cy="1860" r="2" fill="none" stroke="#2f7f92" stroke-width="0.9" />
<circle cx="2860" cy="1860" r="2" fill="none" stroke="#2f7f92" stroke-width="0.9" />
<rect x="2878" y="1822.5" width="10" height="42" fill="#2e2e2e" />
<rect x="2885.5" y="1835" width="2.5" height="27" fill="#5fd36a" />
</g>
<rect x="2576.5" y="1817" width="274.8" height="51.5" fill="none" rx="8.4" stroke="#848484" stroke-width="3.4" />
<rect x="2930.5" y="1836.3" width="4" height="21.8" fill="#f3b063" />
<rect x="2939.5" y="1826.5" width="4.7" height="31.6" fill="#f3b063" />
<rect x="2948.6" y="1839.3" width="4.4" height="18.8" fill="#f3b063" />
<rect x="2959" y="1831.8" width="5" height="26.3" fill="#f3b063" />
<polygon points="2978.3,1836.3 2994.7,1836.3 2986.5,1848.3" fill="#454545"/>
<filter id="cs2" x="-30%" y="-30%" width="160%" height="160%"><feGaussianBlur stdDeviation="3"/></filter>
<polygon points="2101.3,92.7 2101.3,168.9 2116.2,156.4 2128.7,180.2 2145.7,172.5 2135.2,148.7 2157.9,148.3" fill="#000" opacity="0.45" filter="url(#cs2)" transform="translate(2,5)"/>
<polygon points="2101.3,92.7 2101.3,168.9 2116.2,156.4 2128.7,180.2 2145.7,172.5 2135.2,148.7 2157.9,148.3" fill="#000"/>
<polygon points="2105.8,104 2105.8,158.6 2119.5,146.9 2131.1,174 2139,170.5 2128.3,143.9 2146.5,143.3" fill="#c0ff00"/>
</svg></body></html>
